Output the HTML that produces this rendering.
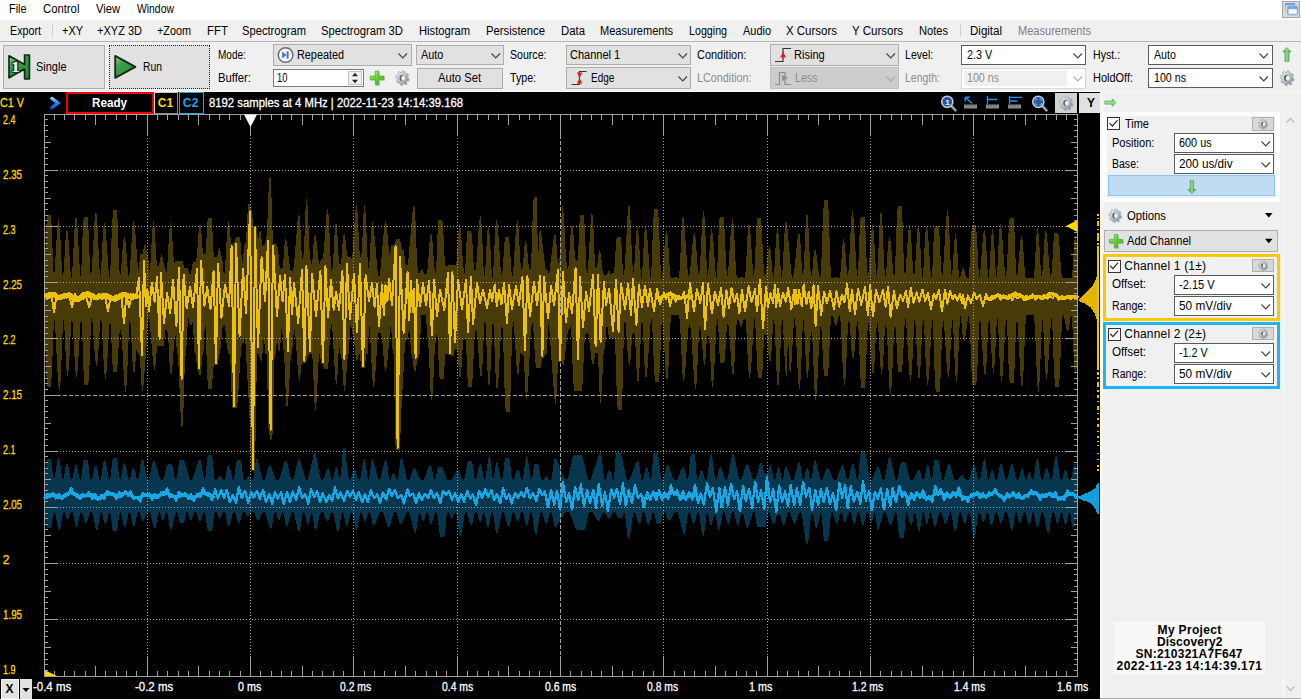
<!DOCTYPE html>
<html lang="en"><head><meta charset="utf-8"><title>WaveForms Scope</title><style>
html,body{margin:0;padding:0;}
body{width:1301px;height:699px;overflow:hidden;background:#f0f0f0;font-family:"Liberation Sans",sans-serif;font-size:12px;position:relative;}
.t{position:absolute;white-space:pre;display:block;}
.b{position:absolute;box-sizing:border-box;}
svg{position:absolute;overflow:visible;}
</style></head><body>
<div class="b" style="left:0px;top:0px;width:1301px;height:20px;background:#ffffff;"></div>
<span class="t" style="left:8.50px;top:2.54px;font-size:12px;line-height:12px;color:#000;transform:scaleX(0.9051);transform-origin:0 0;">File</span>
<span class="t" style="left:42.80px;top:2.54px;font-size:12px;line-height:12px;color:#000;transform:scaleX(0.9410);transform-origin:0 0;">Control</span>
<span class="t" style="left:96.00px;top:2.54px;font-size:12px;line-height:12px;color:#000;transform:scaleX(0.9305);transform-origin:0 0;">View</span>
<span class="t" style="left:137.40px;top:2.54px;font-size:12px;line-height:12px;color:#000;transform:scaleX(0.8646);transform-origin:0 0;">Window</span>
<div class="b" style="left:1282px;top:1px;width:18px;height:17px;background:#d9d9d9;border:1px solid #a6a6a6;"></div>
<svg style="left:0;top:0" width="1" height="1"><defs><linearGradient id="wi" x1="0" y1="0" x2="0" y2="1"><stop offset="0" stop-color="#6f9cdc"/><stop offset="1" stop-color="#a8c4ec"/></linearGradient></defs><rect x="1285" y="3" width="10.3" height="8.6" rx="1" fill="url(#wi)"/><rect x="1286" y="5.6" width="8.3" height="5" fill="#e6eefa"/><rect x="1287.5" y="6.4" width="10.3" height="8.4" rx="1" fill="url(#wi)" stroke="#5f8cd0" stroke-width="0.5"/><rect x="1288.6" y="9.2" width="8.2" height="4.6" fill="#f4f8fe"/></svg>
<div class="b" style="left:0px;top:20px;width:1301px;height:22px;background:#f0f0f0;"></div>
<div class="b" style="left:0px;top:41px;width:1301px;height:1px;background:#b6b6b6;"></div>
<span class="t" style="left:10.00px;top:24.54px;font-size:12px;line-height:12px;color:#000;transform:scaleX(0.8938);transform-origin:0 0;">Export</span>
<span class="t" style="left:62.00px;top:24.54px;font-size:12px;line-height:12px;color:#000;transform:scaleX(0.9124);transform-origin:0 0;">+XY</span>
<span class="t" style="left:97.00px;top:24.54px;font-size:12px;line-height:12px;color:#000;transform:scaleX(0.9180);transform-origin:0 0;">+XYZ 3D</span>
<span class="t" style="left:157.00px;top:24.54px;font-size:12px;line-height:12px;color:#000;transform:scaleX(0.9023);transform-origin:0 0;">+Zoom</span>
<span class="t" style="left:207.00px;top:24.54px;font-size:12px;line-height:12px;color:#000;transform:scaleX(0.9550);transform-origin:0 0;">FFT</span>
<span class="t" style="left:242.00px;top:24.54px;font-size:12px;line-height:12px;color:#000;transform:scaleX(0.9316);transform-origin:0 0;">Spectrogram</span>
<span class="t" style="left:321.00px;top:24.54px;font-size:12px;line-height:12px;color:#000;transform:scaleX(0.9385);transform-origin:0 0;">Spectrogram 3D</span>
<span class="t" style="left:419.00px;top:24.54px;font-size:12px;line-height:12px;color:#000;transform:scaleX(0.9327);transform-origin:0 0;">Histogram</span>
<span class="t" style="left:486.00px;top:24.54px;font-size:12px;line-height:12px;color:#000;transform:scaleX(0.9411);transform-origin:0 0;">Persistence</span>
<span class="t" style="left:561.00px;top:24.54px;font-size:12px;line-height:12px;color:#000;transform:scaleX(0.9469);transform-origin:0 0;">Data</span>
<span class="t" style="left:600.00px;top:24.54px;font-size:12px;line-height:12px;color:#000;transform:scaleX(0.9198);transform-origin:0 0;">Measurements</span>
<span class="t" style="left:689.00px;top:24.54px;font-size:12px;line-height:12px;color:#000;transform:scaleX(0.8898);transform-origin:0 0;">Logging</span>
<span class="t" style="left:743.00px;top:24.54px;font-size:12px;line-height:12px;color:#000;transform:scaleX(0.9123);transform-origin:0 0;">Audio</span>
<span class="t" style="left:786.00px;top:24.54px;font-size:12px;line-height:12px;color:#000;transform:scaleX(0.9560);transform-origin:0 0;">X Cursors</span>
<span class="t" style="left:852.00px;top:24.54px;font-size:12px;line-height:12px;color:#000;transform:scaleX(0.9599);transform-origin:0 0;">Y Cursors</span>
<span class="t" style="left:919.00px;top:24.54px;font-size:12px;line-height:12px;color:#000;transform:scaleX(0.9251);transform-origin:0 0;">Notes</span>
<span class="t" style="left:970.00px;top:24.54px;font-size:12px;line-height:12px;color:#000;transform:scaleX(0.9597);transform-origin:0 0;">Digital</span>
<span class="t" style="left:1018.00px;top:24.54px;font-size:12px;line-height:12px;color:#808080;transform:scaleX(0.9198);transform-origin:0 0;">Measurements</span>
<div class="b" style="left:52px;top:24px;width:1px;height:13px;background:#d0d0d0;"></div>
<div class="b" style="left:960px;top:24px;width:1px;height:13px;background:#d0d0d0;"></div>
<div class="b" style="left:0px;top:42px;width:1301px;height:50px;background:#f0f0f0;"></div>
<div class="b" style="left:0px;top:91px;width:1301px;height:1px;background:#fafafa;"></div>
<div class="b" style="left:3px;top:45px;width:102px;height:44px;background:#e1e1e1;border:1px solid #adadad;"></div>
<div class="b" style="left:109px;top:45px;width:101px;height:44px;background:#e1e1e1;border:1px solid #222;border-style:dotted;"></div>
<svg style="left:0;top:0" width="1" height="1"><defs><linearGradient id="gg" x1="0" y1="0" x2="0.9" y2="1"><stop offset="0" stop-color="#a4d0a0"/><stop offset="0.33" stop-color="#3fa04c"/><stop offset="1" stop-color="#1e8838"/></linearGradient></defs><path d="M9,55.8 L24.6,64.6 L24.6,55 L29.4,55 L29.4,78.8 L24.6,78.8 L24.6,69 L9,77.8 Z" fill="url(#gg)" stroke="#0e2a12" stroke-width="1.7" stroke-linejoin="round"/><path d="M115.2,55.9 L135.4,66.9 L115.2,77.9 Z" fill="url(#gg)" stroke="#0e2a12" stroke-width="1.8" stroke-linejoin="round"/></svg>
<span class="t" style="left:10.6px;top:60.6px;font-family:'Liberation Serif',serif;font-weight:bold;font-size:14px;line-height:14px;color:#fff;transform:scaleX(1.25);transform-origin:0 0;text-shadow:-1px 0 #243424,1px 0 #243424,0 -1px #243424,0 1px #243424,1px 1px #243424,-1px -1px #243424,1px -1px #243424,-1px 1px #243424;">1</span>
<span class="t" style="left:35.50px;top:60.84px;font-size:12px;line-height:12px;color:#000;transform:scaleX(0.9144);transform-origin:0 0;">Single</span>
<span class="t" style="left:142.50px;top:60.84px;font-size:12px;line-height:12px;color:#000;transform:scaleX(0.8631);transform-origin:0 0;">Run</span>
<span class="t" style="left:217.60px;top:49.04px;font-size:12px;line-height:12px;color:#000;transform:scaleX(0.8365);transform-origin:0 0;">Mode:</span>
<span class="t" style="left:217.60px;top:72.14px;font-size:12px;line-height:12px;color:#000;transform:scaleX(0.9393);transform-origin:0 0;">Buffer:</span>
<div class="b" style="left:273px;top:44px;width:139px;height:22px;background:#e1e1e1;border:1px solid #adadad;"></div>
<svg style="left:0;top:0" width="1" height="1"><circle cx="285.6" cy="55" r="7.3" fill="#f4f6fa" stroke="#6a6a6a" stroke-width="1.4"/><path d="M282.2,51.6 L286.6,55 L282.2,58.4 Z" fill="#3c78d8"/><rect x="286.6" y="51.4" width="2" height="7.2" fill="#3c78d8"/></svg>
<span class="t" style="left:297.40px;top:49.04px;font-size:12px;line-height:12px;color:#000;transform:scaleX(0.9031);transform-origin:0 0;">Repeated</span>
<svg style="left:398.45px;top:53.25px" width="9.5" height="5.5"><polyline points="0.5,0.5 4.75,5 9,0.5" fill="none" stroke="#404040" stroke-width="1.1"/></svg>
<div class="b" style="left:273px;top:69px;width:91px;height:18px;background:#fff;border:1px solid #7a7a7a;"></div>
<span class="t" style="left:277.00px;top:72.14px;font-size:12px;line-height:12px;color:#000;transform:scaleX(0.7792);transform-origin:0 0;">10</span>
<div class="b" style="left:348px;top:71px;width:14px;height:14px;background:#f0f0f0;border:1px solid #c4c4c4;"></div>
<svg style="left:0;top:0" width="1" height="1"><path d="M352,76.2 L355,72.8 L358,76.2 Z M352,79.8 L355,83.2 L358,79.8 Z" fill="#222"/></svg>
<svg style="left:0;top:0" width="1" height="1"><defs><linearGradient id="pl1" x1="0" y1="0" x2="0.8" y2="1"><stop offset="0" stop-color="#c4f4a4"/><stop offset="0.45" stop-color="#6fd23e"/><stop offset="1" stop-color="#3fb41c"/></linearGradient></defs><path d="M375.3,71 h3.4 v5.1 h5.1 v3.4 h-5.1 v5.1 h-3.4 v-5.1 h-5.1 v-3.4 h5.1 z" transform="translate(0.7,0.9)" fill="#4a6a3a" opacity="0.35" stroke="#4a6a3a" stroke-width="0.8" stroke-linejoin="round"/><path d="M375.3,71 h3.4 v5.1 h5.1 v3.4 h-5.1 v5.1 h-3.4 v-5.1 h-5.1 v-3.4 h5.1 z" fill="url(#pl1)" stroke="#48b020" stroke-width="0.7" stroke-linejoin="round"/></svg>
<svg style="left:0;top:0" width="1" height="1"><defs><linearGradient id="gr1" x1="0" y1="0" x2="1" y2="1"><stop offset="0" stop-color="#f4f5f6"/><stop offset="0.5" stop-color="#bcc2c8"/><stop offset="1" stop-color="#6f7c88"/></linearGradient></defs><polygon points="408.99,78.31 408.57,80.52 406.90,80.35 406.05,81.70 406.83,83.30 405.08,84.55 404.01,83.16 402.52,83.47 402.01,85.19 399.96,84.75 400.12,82.94 398.86,82.03 397.37,82.87 396.21,80.99 397.51,79.83 397.22,78.24 395.61,77.69 396.03,75.48 397.70,75.65 398.55,74.30 397.77,72.70 399.52,71.45 400.59,72.84 402.08,72.53 402.59,70.81 404.64,71.25 404.48,73.06 405.74,73.97 407.23,73.13 408.39,75.01 407.09,76.17 407.38,77.76" transform="translate(0.9,1.1)" fill="#70777d" opacity="0.35"/><polygon points="408.99,78.31 408.57,80.52 406.90,80.35 406.05,81.70 406.83,83.30 405.08,84.55 404.01,83.16 402.52,83.47 402.01,85.19 399.96,84.75 400.12,82.94 398.86,82.03 397.37,82.87 396.21,80.99 397.51,79.83 397.22,78.24 395.61,77.69 396.03,75.48 397.70,75.65 398.55,74.30 397.77,72.70 399.52,71.45 400.59,72.84 402.08,72.53 402.59,70.81 404.64,71.25 404.48,73.06 405.74,73.97 407.23,73.13 408.39,75.01 407.09,76.17 407.38,77.76" fill="url(#gr1)" stroke="#8f99a2" stroke-width="0.5"/><ellipse cx="402.10" cy="78.00" rx="2.59" ry="3.02" fill="#55626c"/><ellipse cx="403.20" cy="78.20" rx="1.94" ry="2.59" fill="#eef0f1"/></svg>
<div class="b" style="left:416px;top:45px;width:88px;height:20px;background:#e1e1e1;border:1px solid #adadad;"></div>
<span class="t" style="left:420.70px;top:49.04px;font-size:12px;line-height:12px;color:#000;transform:scaleX(0.9033);transform-origin:0 0;">Auto</span>
<svg style="left:490.75px;top:53.25px" width="9.5" height="5.5"><polyline points="0.5,0.5 4.75,5 9,0.5" fill="none" stroke="#404040" stroke-width="1.1"/></svg>
<div class="b" style="left:417px;top:68px;width:86px;height:21px;background:#e1e1e1;border:1px solid #adadad;"></div>
<span class="t" style="left:438.00px;top:72.14px;font-size:12px;line-height:12px;color:#000;transform:scaleX(0.9341);transform-origin:0 0;">Auto Set</span>
<span class="t" style="left:509.50px;top:49.04px;font-size:12px;line-height:12px;color:#000;transform:scaleX(0.8826);transform-origin:0 0;">Source:</span>
<span class="t" style="left:510.00px;top:72.14px;font-size:12px;line-height:12px;color:#000;transform:scaleX(0.8859);transform-origin:0 0;">Type:</span>
<div class="b" style="left:566px;top:45px;width:125px;height:20px;background:#e1e1e1;border:1px solid #adadad;"></div>
<span class="t" style="left:569.50px;top:49.04px;font-size:12px;line-height:12px;color:#000;transform:scaleX(0.9176);transform-origin:0 0;">Channel 1</span>
<svg style="left:677.55px;top:53.25px" width="9.5" height="5.5"><polyline points="0.5,0.5 4.75,5 9,0.5" fill="none" stroke="#404040" stroke-width="1.1"/></svg>
<div class="b" style="left:566px;top:67px;width:125px;height:22px;background:#e1e1e1;border:1px solid #adadad;"></div>
<svg style="left:0;top:0" width="1" height="1"><path d="M571.5,84.5 H579.5 V71.5 H586.5" fill="none" stroke="#333" stroke-width="1.2"/><path d="M579.5,78 L576.8,72.5 H582.2 Z M579.5,78 L576.8,83.5 H582.2 Z" fill="#f01818"/></svg>
<span class="t" style="left:590.70px;top:72.14px;font-size:12px;line-height:12px;color:#000;transform:scaleX(0.8314);transform-origin:0 0;">Edge</span>
<svg style="left:677.55px;top:76.25px" width="9.5" height="5.5"><polyline points="0.5,0.5 4.75,5 9,0.5" fill="none" stroke="#404040" stroke-width="1.1"/></svg>
<span class="t" style="left:696.70px;top:49.04px;font-size:12px;line-height:12px;color:#000;transform:scaleX(0.9124);transform-origin:0 0;">Condition:</span>
<span class="t" style="left:697.40px;top:72.14px;font-size:12px;line-height:12px;color:#8c8c8c;transform:scaleX(0.8994);transform-origin:0 0;">LCondition:</span>
<div class="b" style="left:770px;top:44px;width:129px;height:22px;background:#e1e1e1;border:1px solid #adadad;"></div>
<svg style="left:0;top:0" width="1" height="1"><path d="M775,61.5 H783 V48.5 H791" fill="none" stroke="#333" stroke-width="1.2"/><path d="M783,51.5 L780.2,57.5 H785.8 Z" fill="#f01818"/></svg>
<span class="t" style="left:794.30px;top:49.04px;font-size:12px;line-height:12px;color:#000;transform:scaleX(0.9207);transform-origin:0 0;">Rising</span>
<svg style="left:885.75px;top:53.25px" width="9.5" height="5.5"><polyline points="0.5,0.5 4.75,5 9,0.5" fill="none" stroke="#404040" stroke-width="1.1"/></svg>
<div class="b" style="left:770px;top:67px;width:129px;height:22px;background:#cccccc;border:1px solid #bfbfbf;"></div>
<svg style="left:0;top:0" width="1" height="1"><path d="M775,84.5 H779.5 V72.5 H785 V84.5 H791" fill="none" stroke="#8a8a8a" stroke-width="1.2"/><path d="M782,75 L788.5,78 L782,81 Z" fill="#909090"/></svg>
<span class="t" style="left:794.60px;top:72.14px;font-size:12px;line-height:12px;color:#8c8c8c;transform:scaleX(0.8837);transform-origin:0 0;">Less</span>
<svg style="left:885.75px;top:76.25px" width="9.5" height="5.5"><polyline points="0.5,0.5 4.75,5 9,0.5" fill="none" stroke="#a8a8a8" stroke-width="1.1"/></svg>
<span class="t" style="left:905.40px;top:49.04px;font-size:12px;line-height:12px;color:#000;transform:scaleX(0.8807);transform-origin:0 0;">Level:</span>
<span class="t" style="left:905.40px;top:72.14px;font-size:12px;line-height:12px;color:#8c8c8c;transform:scaleX(0.8742);transform-origin:0 0;">Length:</span>
<div class="b" style="left:961px;top:45px;width:125px;height:20px;background:#fff;border:1px solid #5a5a5a;"></div>
<span class="t" style="left:966.80px;top:49.04px;font-size:12px;line-height:12px;color:#000;transform:scaleX(0.8993);transform-origin:0 0;">2.3 V</span>
<svg style="left:1072.55px;top:53.25px" width="9.5" height="5.5"><polyline points="0.5,0.5 4.75,5 9,0.5" fill="none" stroke="#404040" stroke-width="1.1"/></svg>
<div class="b" style="left:961px;top:68px;width:125px;height:21px;background:#fff;border:1px solid #d9d9d9;"></div>
<div class="b" style="left:964px;top:71px;width:103px;height:15px;background:#f0f0f0;"></div>
<span class="t" style="left:967.00px;top:72.14px;font-size:12px;line-height:12px;color:#8c8c8c;transform:scaleX(0.8882);transform-origin:0 0;">100 ns</span>
<svg style="left:1072.55px;top:76.25px" width="9.5" height="5.5"><polyline points="0.5,0.5 4.75,5 9,0.5" fill="none" stroke="#b0b0b0" stroke-width="1.1"/></svg>
<span class="t" style="left:1092.50px;top:49.04px;font-size:12px;line-height:12px;color:#000;transform:scaleX(0.8836);transform-origin:0 0;">Hyst.:</span>
<span class="t" style="left:1092.50px;top:72.14px;font-size:12px;line-height:12px;color:#000;transform:scaleX(0.9133);transform-origin:0 0;">HoldOff:</span>
<div class="b" style="left:1148px;top:45px;width:125px;height:20px;background:#fff;border:1px solid #5a5a5a;"></div>
<span class="t" style="left:1154.00px;top:49.04px;font-size:12px;line-height:12px;color:#000;transform:scaleX(0.8831);transform-origin:0 0;">Auto</span>
<svg style="left:1259.25px;top:53.25px" width="9.5" height="5.5"><polyline points="0.5,0.5 4.75,5 9,0.5" fill="none" stroke="#404040" stroke-width="1.1"/></svg>
<div class="b" style="left:1148px;top:68px;width:125px;height:20px;background:#fff;border:1px solid #5a5a5a;"></div>
<span class="t" style="left:1154.00px;top:72.14px;font-size:12px;line-height:12px;color:#000;transform:scaleX(0.8882);transform-origin:0 0;">100 ns</span>
<svg style="left:1259.25px;top:76.25px" width="9.5" height="5.5"><polyline points="0.5,0.5 4.75,5 9,0.5" fill="none" stroke="#404040" stroke-width="1.1"/></svg>
<svg style="left:0;top:0" width="1" height="1"><defs><linearGradient id="gup" x1="0" y1="0" x2="1" y2="0"><stop offset="0" stop-color="#2f902f"/><stop offset="0.5" stop-color="#9ad892"/><stop offset="1" stop-color="#2f902f"/></linearGradient></defs><path d="M1286.9,47.6 L1291.2,51.9 H1289.1 V61.6 H1284.9 V51.9 H1282.7 Z" fill="url(#gup)" stroke="#3c9c3a" stroke-width="0.5" stroke-linejoin="round"/></svg>
<svg style="left:0;top:0" width="1" height="1"><defs><linearGradient id="gr2" x1="0" y1="0" x2="1" y2="1"><stop offset="0" stop-color="#f4f5f6"/><stop offset="0.5" stop-color="#bcc2c8"/><stop offset="1" stop-color="#6f7c88"/></linearGradient></defs><polygon points="1293.78,78.32 1293.35,80.59 1291.62,80.41 1290.76,81.80 1291.55,83.45 1289.76,84.73 1288.65,83.30 1287.13,83.62 1286.60,85.39 1284.49,84.93 1284.66,83.08 1283.37,82.15 1281.83,83.00 1280.64,81.07 1281.97,79.89 1281.67,78.24 1280.02,77.68 1280.45,75.41 1282.18,75.59 1283.04,74.20 1282.25,72.55 1284.04,71.27 1285.15,72.70 1286.67,72.38 1287.20,70.61 1289.31,71.07 1289.14,72.92 1290.43,73.85 1291.97,73.00 1293.16,74.93 1291.83,76.11 1292.13,77.76" transform="translate(0.9,1.1)" fill="#70777d" opacity="0.35"/><polygon points="1293.78,78.32 1293.35,80.59 1291.62,80.41 1290.76,81.80 1291.55,83.45 1289.76,84.73 1288.65,83.30 1287.13,83.62 1286.60,85.39 1284.49,84.93 1284.66,83.08 1283.37,82.15 1281.83,83.00 1280.64,81.07 1281.97,79.89 1281.67,78.24 1280.02,77.68 1280.45,75.41 1282.18,75.59 1283.04,74.20 1282.25,72.55 1284.04,71.27 1285.15,72.70 1286.67,72.38 1287.20,70.61 1289.31,71.07 1289.14,72.92 1290.43,73.85 1291.97,73.00 1293.16,74.93 1291.83,76.11 1292.13,77.76" fill="url(#gr2)" stroke="#8f99a2" stroke-width="0.5"/><ellipse cx="1286.70" cy="78.00" rx="2.66" ry="3.11" fill="#55626c"/><ellipse cx="1287.80" cy="78.20" rx="2.00" ry="2.66" fill="#eef0f1"/></svg>
<div class="b" style="left:0px;top:92px;width:1100px;height:607px;background:#000;"></div>
<span class="t" style="left:-0.50px;top:96.74px;font-size:12px;line-height:12px;color:#ffd800;transform:scaleX(0.8996);transform-origin:0 0;-webkit-text-stroke:0.3px #ffd800;">C1 V</span>
<svg style="left:0;top:0" width="1" height="1"><defs><linearGradient id="bl" x1="0" y1="0" x2="0" y2="1"><stop offset="0" stop-color="#8cc4ff"/><stop offset="0.45" stop-color="#2a84ff"/><stop offset="1" stop-color="#1060e0"/></linearGradient></defs><path d="M51.8,98.4 L58,103.1 L51.8,107.8" fill="none" stroke="url(#bl)" stroke-width="3.3" stroke-linecap="round" stroke-linejoin="miter"/></svg>
<div class="b" style="left:66px;top:92px;width:88px;height:22px;background:#000;border:2px solid #f00000;"></div>
<span class="t" style="left:91.50px;top:96.74px;font-size:12px;line-height:12px;color:#fff;transform:scaleX(0.9718);transform-origin:0 0;font-weight:bold;">Ready</span>
<div class="b" style="left:154px;top:92px;width:24px;height:22px;background:#000;border:1px solid #8a8a8a;border-left-color:#e8e8e8;border-top-color:#c8c8c8;"></div>
<span class="t" style="left:157.80px;top:96.94px;font-size:12px;line-height:12px;color:#ffd800;letter-spacing:0.061px;font-weight:bold;">C1</span>
<div class="b" style="left:179px;top:92px;width:25px;height:22px;background:#000;border:1px solid #1ea4e8;"></div>
<span class="t" style="left:182.80px;top:96.94px;font-size:12px;line-height:12px;color:#18a8f0;letter-spacing:0.261px;font-weight:bold;">C2</span>
<span class="t" style="left:208.50px;top:96.74px;font-size:12px;line-height:12px;color:#fff;transform:scaleX(0.9417);transform-origin:0 0;-webkit-text-stroke:0.3px #fff;">8192 samples at 4 MHz | 2022-11-23 14:14:39.168</span>
<svg style="left:0;top:0" width="1" height="1"><g><line x1="950.8" y1="105.3" x2="955.5" y2="110.3" stroke="#9aa0a8" stroke-width="2.6" stroke-linecap="round"/><circle cx="947.3" cy="101.8" r="5.6" fill="#2458a8" stroke="#c8d0dc" stroke-width="1.5"/><text x="945.2" y="105" font-size="8" font-weight="bold" fill="#fff" font-family="Liberation Sans,sans-serif">1</text></g><g><line x1="1041.8" y1="105.3" x2="1046.5" y2="110.3" stroke="#9aa0a8" stroke-width="2.6" stroke-linecap="round"/><circle cx="1038.3" cy="101.8" r="5.6" fill="#2458a8" stroke="#c8d0dc" stroke-width="1.5"/><path d="M1035.3,100.8 v-1.8 h1.8 M1041.3,100.8 v-1.8 h-1.8 M1035.3,102.8 v1.8 h1.8 M1041.3,102.8 v1.8 h-1.8" stroke="#9cc0f0" stroke-width="0.8" fill="none"/></g><rect x="964" y="104.5" width="13" height="4" fill="#8a8a8a"/><path d="M966.5,104.5 v2 M969,104.5 v2 M971.5,104.5 v2 M974,104.5 v2" stroke="#555" stroke-width="0.8"/><rect x="986" y="104.5" width="13" height="4" fill="#8a8a8a"/><path d="M988.5,104.5 v2 M991,104.5 v2 M993.5,104.5 v2 M996,104.5 v2" stroke="#555" stroke-width="0.8"/><rect x="1008" y="104.5" width="13" height="4" fill="#8a8a8a"/><path d="M1010.5,104.5 v2 M1013,104.5 v2 M1015.5,104.5 v2 M1018,104.5 v2" stroke="#555" stroke-width="0.8"/><path d="M965.5,97.5 L972,103.5 M965.2,97.2 h4.4 M965.2,97.2 v4.4" stroke="#1e90ff" stroke-width="1.4" fill="none"/><path d="M987.5,96 v8 M987.5,99.5 h9.5" stroke="#1e90ff" stroke-width="1.3" fill="none"/><path d="M1009.5,96 v8 M1009.5,97.3 h12.5 M1009.5,101 h8" stroke="#1e90ff" stroke-width="1.3" fill="none"/></svg>
<div class="b" style="left:1055px;top:93px;width:22px;height:20px;background:#d2d2d2;"></div>
<div class="b" style="left:1079px;top:93px;width:21px;height:20px;background:#e1e1e1;"></div>
<span class="t" style="left:1087.00px;top:96.94px;font-size:12px;line-height:12px;color:#000;font-weight:bold;">Y</span>
<svg style="left:0;top:0" width="1" height="1"><defs><linearGradient id="gr3" x1="0" y1="0" x2="1" y2="1"><stop offset="0" stop-color="#f4f5f6"/><stop offset="0.5" stop-color="#bcc2c8"/><stop offset="1" stop-color="#6f7c88"/></linearGradient></defs><polygon points="1072.69,103.31 1072.27,105.52 1070.60,105.35 1069.75,106.70 1070.53,108.30 1068.78,109.55 1067.71,108.16 1066.22,108.47 1065.71,110.19 1063.66,109.75 1063.82,107.94 1062.56,107.03 1061.07,107.87 1059.91,105.99 1061.21,104.83 1060.92,103.24 1059.31,102.69 1059.73,100.48 1061.40,100.65 1062.25,99.30 1061.47,97.70 1063.22,96.45 1064.29,97.84 1065.78,97.53 1066.29,95.81 1068.34,96.25 1068.18,98.06 1069.44,98.97 1070.93,98.13 1072.09,100.01 1070.79,101.17 1071.08,102.76" transform="translate(0.9,1.1)" fill="#70777d" opacity="0.35"/><polygon points="1072.69,103.31 1072.27,105.52 1070.60,105.35 1069.75,106.70 1070.53,108.30 1068.78,109.55 1067.71,108.16 1066.22,108.47 1065.71,110.19 1063.66,109.75 1063.82,107.94 1062.56,107.03 1061.07,107.87 1059.91,105.99 1061.21,104.83 1060.92,103.24 1059.31,102.69 1059.73,100.48 1061.40,100.65 1062.25,99.30 1061.47,97.70 1063.22,96.45 1064.29,97.84 1065.78,97.53 1066.29,95.81 1068.34,96.25 1068.18,98.06 1069.44,98.97 1070.93,98.13 1072.09,100.01 1070.79,101.17 1071.08,102.76" fill="url(#gr3)" stroke="#8f99a2" stroke-width="0.5"/><ellipse cx="1065.80" cy="103.00" rx="2.59" ry="3.02" fill="#55626c"/><ellipse cx="1066.90" cy="103.20" rx="1.94" ry="2.59" fill="#eef0f1"/></svg>
<svg style="left:0;top:0" width="1100" height="699" shape-rendering="crispEdges"><path d="M45,265L45,265L46,234L47,215L48,215L49,215L50,215L51,215L52,233L53,263L54,278L55,266L56,249L57,232L58,219L59,219L60,230L61,250L62,271L63,278L64,266L65,249L66,232L67,230L68,232L69,247L70,263L71,278L72,277L73,258L74,239L75,219L76,217L77,219L78,237L79,255L80,273L81,278L82,252L83,223L84,217L85,217L86,217L87,217L88,217L89,242L90,267L91,278L92,266L93,249L94,231L95,214L96,212L97,215L98,237L99,260L100,278L101,272L102,252L103,233L104,223L105,223L106,234L107,248L108,262L109,277L110,278L111,252L112,226L113,210L114,210L115,210L116,210L117,210L118,230L119,264L120,278L121,270L122,257L123,244L124,237L125,237L126,246L127,260L128,273L129,278L130,269L131,252L132,234L133,221L134,221L135,228L136,242L137,256L138,269L139,271L140,254L141,254L142,254L143,254L144,245L145,244L146,245L147,254L148,254L149,266L150,273L151,254L152,235L153,221L154,221L155,232L156,253L157,266L158,266L159,266L160,261L161,254L162,254L163,259L164,266L165,266L166,274L167,271L168,253L169,236L170,223L171,223L172,232L173,249L174,265L175,261L176,261L177,261L178,261L179,261L180,261L181,261L182,261L183,261L184,268L185,268L186,268L187,268L188,268L189,274L190,274L191,274L192,267L193,262L194,262L195,262L196,262L197,254L198,241L199,226L200,224L201,226L202,242L203,254L204,254L205,254L206,252L207,224L208,218L209,218L210,218L211,218L212,218L213,246L214,257L215,257L216,257L217,257L218,253L219,248L220,248L221,255L222,257L223,265L224,278L225,269L226,251L227,233L228,221L229,221L230,229L231,244L232,244L233,244L234,242L235,242L236,237L237,237L238,237L239,237L240,237L241,247L242,262L243,262L244,245L245,245L246,242L247,223L248,205L249,203L250,205L251,210L252,210L253,226L254,226L255,226L256,226L257,226L258,244L259,232L260,231L261,232L262,246L263,245L264,245L265,245L266,239L267,233L268,206L269,179L270,176L271,180L272,215L273,244L274,244L275,244L276,245L277,245L278,248L279,260L280,269L281,268L282,268L283,267L284,251L285,239L286,239L287,243L288,251L289,260L290,268L291,271L292,271L293,271L294,266L295,253L296,240L297,228L298,215L299,214L300,217L301,242L302,259L303,259L304,251L305,221L306,199L307,199L308,213L309,239L310,259L311,261L312,267L313,252L314,237L315,235L316,236L317,246L318,255L319,264L320,264L321,259L322,259L323,259L324,248L325,234L326,219L327,209L328,209L329,221L330,244L331,268L332,273L333,264L334,245L335,225L336,223L337,225L338,246L339,264L340,264L341,264L342,253L343,236L344,234L345,235L346,245L347,255L348,257L349,257L350,257L351,257L352,261L353,246L354,231L355,216L356,205L357,205L358,218L359,245L360,257L361,257L362,250L363,224L364,205L365,205L366,219L367,246L368,268L369,268L370,254L371,233L372,222L373,222L374,230L375,241L376,253L377,264L378,276L379,277L380,275L381,264L382,252L383,241L384,229L385,221L386,221L387,227L388,240L389,252L390,257L391,245L392,245L393,245L394,244L395,244L396,239L397,239L398,239L399,239L400,239L401,244L402,250L403,250L404,250L405,261L406,265L407,265L408,264L409,252L410,241L411,229L412,218L413,206L414,205L415,208L416,234L417,261L418,273L419,273L420,273L421,270L422,269L423,270L424,274L425,274L426,274L427,274L428,265L429,250L430,235L431,234L432,235L433,249L434,263L435,273L436,273L437,249L438,220L439,220L440,220L441,220L442,220L443,224L444,245L445,266L446,266L447,266L448,265L449,265L450,265L451,265L452,265L453,265L454,265L455,265L456,265L457,259L458,238L459,224L460,224L461,232L462,248L463,263L464,273L465,273L466,253L467,231L468,231L469,231L470,231L471,231L472,235L473,253L474,270L475,270L476,270L477,255L478,239L479,224L480,216L481,216L482,232L483,255L484,278L485,275L486,256L487,236L488,227L489,227L490,240L491,259L492,278L493,277L494,256L495,235L496,220L497,220L498,228L499,243L500,259L501,275L502,276L503,266L504,248L505,237L506,237L507,237L508,237L509,237L510,248L511,266L512,278L513,275L514,259L515,244L516,228L517,220L518,220L519,235L520,256L521,270L522,270L523,265L524,251L525,241L526,241L527,247L528,258L529,269L530,269L531,269L532,239L533,204L534,197L535,197L536,197L537,197L538,269L539,234L540,230L541,231L542,240L543,248L544,257L545,265L546,270L547,270L548,270L549,275L550,267L551,259L552,251L553,243L554,235L555,234L556,236L557,254L558,263L559,263L560,253L561,226L562,206L563,206L564,217L565,238L566,259L567,265L568,273L569,259L570,243L571,227L572,225L573,227L574,242L575,257L576,261L577,261L578,259L579,232L580,215L581,215L582,215L583,215L584,215L585,232L586,259L587,278L588,269L589,251L590,233L591,215L592,213L593,216L594,241L595,267L596,268L597,268L598,259L599,250L600,250L601,255L602,265L603,274L604,275L605,275L606,275L607,275L608,271L609,271L610,271L611,276L612,273L613,273L614,273L615,262L616,241L617,237L618,237L619,237L620,237L621,237L622,255L623,273L624,277L625,264L626,245L627,226L628,207L629,205L630,207L631,232L632,257L633,272L634,272L635,254L636,236L637,227L638,227L639,240L640,259L641,278L642,277L643,258L644,239L645,226L646,226L647,233L648,247L649,261L650,276L651,278L652,254L653,226L654,209L655,209L656,209L657,209L658,209L659,225L660,252L661,278L662,278L663,265L664,253L665,240L666,231L667,231L668,239L669,256L670,273L671,278L672,278L673,278L674,277L675,277L676,277L677,278L678,278L679,278L680,264L681,242L682,219L683,217L684,218L685,233L686,248L687,262L688,276L689,276L690,272L691,261L692,250L693,239L694,233L695,233L696,243L697,258L698,272L699,276L700,266L701,246L702,225L703,211L704,211L705,223L706,248L707,272L708,277L709,261L710,242L711,229L712,229L713,236L714,250L715,264L716,278L717,276L718,249L719,222L720,217L721,217L722,217L723,217L724,217L725,240L726,262L727,278L728,274L729,259L730,244L731,229L732,219L733,219L734,229L735,250L736,271L737,278L738,278L739,278L740,277L741,277L742,277L743,278L744,278L745,278L746,267L747,246L748,226L749,224L750,226L751,241L752,256L753,272L754,278L755,260L756,234L757,218L758,218L759,218L760,218L761,218L762,232L763,256L764,272L765,278L766,271L767,262L768,253L769,246L770,246L771,253L772,266L773,278L774,277L775,258L776,238L777,228L778,228L779,240L780,257L781,275L782,278L783,262L784,243L785,224L786,222L787,223L788,235L789,246L790,258L791,270L792,278L793,278L794,273L795,263L796,253L797,244L798,234L799,233L800,235L801,252L802,270L803,278L804,263L805,240L806,216L807,214L808,216L809,240L810,263L811,278L812,275L813,263L814,251L815,250L816,251L817,259L818,267L819,275L820,278L821,273L822,245L823,217L824,200L825,200L826,200L827,200L828,200L829,220L830,254L831,278L832,278L833,278L834,278L835,277L836,277L837,277L838,278L839,278L840,278L841,267L842,251L843,239L844,239L845,246L846,260L847,273L848,277L849,265L850,244L851,222L852,211L853,211L854,224L855,242L856,260L857,278L858,274L859,248L860,222L861,217L862,217L863,217L864,217L865,217L866,244L867,271L868,278L869,266L870,251L871,236L872,225L873,225L874,234L875,253L876,272L877,278L878,260L879,237L880,214L881,212L882,214L883,237L884,260L885,278L886,275L887,260L888,245L889,237L890,237L891,245L892,257L893,269L894,278L895,272L896,242L897,212L898,206L899,206L900,206L901,206L902,206L903,237L904,268L905,278L906,266L907,251L908,236L909,225L910,225L911,234L912,252L913,269L914,278L915,269L916,252L917,234L918,225L919,225L920,239L921,258L922,277L923,277L924,258L925,239L926,226L927,226L928,233L929,248L930,263L931,278L932,278L933,254L934,231L935,226L936,226L937,226L938,226L939,226L940,246L941,265L942,278L943,272L944,255L945,238L946,222L947,210L948,210L949,222L950,247L951,272L952,278L953,263L954,246L955,234L956,234L957,243L958,262L959,278L960,278L961,275L962,269L963,268L964,268L965,273L966,277L967,278L968,278L969,277L970,257L971,237L972,225L973,225L974,225L975,225L976,225L977,238L978,260L979,278L980,276L981,263L982,250L983,237L984,230L985,230L986,242L987,260L988,278L989,278L990,260L991,242L992,229L993,229L994,239L995,258L996,277L997,276L998,256L999,234L1000,224L1001,224L1002,233L1003,247L1004,260L1005,274L1006,278L1007,265L1008,244L1009,222L1010,218L1011,218L1012,218L1013,218L1014,218L1015,245L1016,271L1017,278L1018,270L1019,257L1020,245L1021,236L1022,236L1023,244L1024,259L1025,275L1026,278L1027,278L1028,278L1029,278L1030,278L1031,278L1032,278L1033,278L1034,278L1035,263L1036,242L1037,228L1038,228L1039,237L1040,256L1041,274L1042,278L1043,264L1044,247L1045,231L1046,231L1047,235L1048,248L1049,261L1050,274L1051,278L1052,269L1053,250L1054,233L1055,233L1056,233L1057,233L1058,233L1059,237L1060,254L1061,270L1062,278L1063,278L1064,278L1065,278L1066,278L1067,278L1068,278L1069,278L1070,278L1071,278L1072,278L1073,262L1074,245L1075,236L1076,236L1077,246L1077,362L1076,374L1075,374L1074,363L1073,340L1072,317L1071,315L1070,321L1069,329L1068,331L1067,331L1066,327L1065,321L1064,316L1063,315L1062,319L1061,345L1060,371L1059,387L1058,387L1057,387L1056,387L1055,387L1054,371L1053,344L1052,316L1051,320L1050,336L1049,352L1048,369L1047,379L1046,379L1045,367L1044,344L1043,321L1042,319L1041,346L1040,373L1039,392L1038,392L1037,379L1036,354L1035,328L1034,315L1033,315L1032,315L1031,315L1030,315L1029,315L1028,315L1027,315L1026,315L1025,333L1024,359L1023,384L1022,387L1021,385L1020,367L1019,348L1018,330L1017,315L1016,329L1015,356L1014,383L1013,383L1012,383L1011,383L1010,383L1009,377L1008,350L1007,322L1006,317L1005,334L1004,352L1003,370L1002,382L1001,382L1000,370L999,346L998,322L997,316L996,337L995,358L994,373L993,373L992,363L991,343L990,324L989,315L988,332L987,353L986,373L985,375L984,373L983,358L982,343L981,328L980,315L979,327L978,353L977,380L976,385L975,385L974,385L973,385L972,385L971,357L970,330L969,315L968,317L967,325L966,333L965,340L964,341L963,340L962,328L961,317L960,315L959,339L958,364L957,382L956,382L955,370L954,346L953,322L952,317L951,339L950,361L949,377L948,377L947,369L946,354L945,339L944,323L943,318L942,336L941,364L940,392L939,392L938,392L937,392L936,392L935,386L934,353L933,321L932,319L931,338L930,357L929,376L928,385L927,385L926,369L925,346L924,324L923,315L922,335L921,356L920,377L919,379L918,377L917,355L916,334L915,315L914,326L913,348L912,370L911,381L910,381L909,369L908,353L907,336L906,320L905,315L904,337L903,359L902,372L901,372L900,372L899,372L898,372L897,356L896,329L895,324L894,334L893,357L892,379L891,394L890,394L889,382L888,357L887,333L886,323L885,327L884,346L883,365L882,374L881,374L880,360L879,341L878,322L877,323L876,333L875,353L874,372L873,374L872,372L871,356L870,340L869,324L868,322L867,339L866,370L865,388L864,388L863,388L862,388L861,388L860,370L859,339L858,321L857,321L856,332L855,345L854,357L853,358L852,357L851,342L850,327L849,318L848,324L847,347L846,369L845,385L844,385L843,373L842,350L841,327L840,315L839,315L838,319L837,324L836,325L835,325L834,320L833,316L832,316L831,316L830,334L829,360L828,376L827,376L826,376L825,376L824,376L823,361L822,337L821,322L820,333L819,347L818,368L817,389L816,400L815,400L814,380L813,351L812,333L811,331L810,341L809,363L808,378L807,378L806,367L805,344L804,322L803,318L802,345L801,371L800,389L799,389L798,378L797,357L796,336L795,316L794,320L793,337L792,354L791,371L790,373L789,366L788,323L787,376L786,376L785,366L784,345L783,324L782,315L781,336L780,360L779,384L778,386L777,383L776,358L775,333L774,315L773,325L772,343L771,360L770,362L769,361L768,348L767,335L766,335L765,335L764,335L763,362L762,378L761,378L760,378L759,378L758,378L757,363L756,338L755,318L754,321L753,337L752,354L751,370L750,378L749,378L748,364L747,343L746,322L745,318L744,319L743,321L742,326L741,327L740,326L739,320L738,320L737,320L736,330L735,351L734,373L733,375L732,373L731,358L730,343L729,328L728,324L727,324L726,340L725,359L724,363L723,363L722,363L721,363L720,363L719,342L718,321L717,316L716,335L715,354L714,374L713,387L712,387L711,374L710,349L709,336L708,336L707,336L706,352L705,365L704,365L703,357L702,341L701,336L700,324L699,331L698,354L697,377L696,389L695,389L694,378L693,362L692,346L691,330L690,325L689,325L688,331L687,345L686,360L685,374L684,381L683,381L682,366L681,344L680,323L679,315L678,315L677,315L676,315L675,315L674,315L673,315L672,315L671,315L670,331L669,354L668,378L667,380L666,378L665,361L664,343L663,326L662,315L661,336L660,365L659,382L658,382L657,382L656,382L655,382L654,368L653,344L652,320L651,318L650,331L649,346L648,361L647,376L646,378L645,376L644,353L643,331L642,315L641,332L640,356L639,380L638,382L637,380L636,358L635,336L634,332L633,332L632,337L631,353L630,365L629,365L628,358L627,344L626,329L625,316L624,328L623,369L622,410L621,410L620,410L619,410L618,410L617,403L616,368L615,339L614,338L613,338L612,338L611,338L610,338L609,338L608,332L607,321L606,333L605,349L604,349L603,360L602,389L601,403L600,403L599,380L598,353L597,353L596,353L595,353L594,363L593,365L592,364L591,355L590,347L589,338L588,330L587,334L586,334L585,334L584,350L583,377L582,391L581,391L580,391L579,391L578,391L577,391L576,391L575,391L574,391L573,377L572,350L571,324L570,329L569,329L568,330L567,338L566,347L565,356L564,364L563,365L562,363L561,362L560,362L559,362L558,362L557,387L556,404L555,404L554,394L553,380L552,366L551,353L550,339L549,325L548,325L547,354L546,354L545,354L544,358L543,358L542,358L541,367L540,368L539,368L538,368L537,368L536,368L535,357L534,340L533,323L532,323L531,330L530,349L529,367L528,386L527,399L526,399L525,385L524,358L523,354L522,354L521,354L520,353L519,373L518,375L517,373L516,358L515,342L514,327L513,316L512,338L511,375L510,412L509,412L508,412L507,412L506,412L505,405L504,369L503,333L502,323L501,332L500,350L499,369L498,387L497,389L496,386L495,360L494,334L493,315L492,333L491,358L490,383L489,386L488,383L487,358L486,333L485,315L484,330L483,353L482,375L481,377L480,375L479,360L478,345L477,331L476,331L475,331L474,346L473,372L472,387L471,387L470,387L469,387L468,387L467,369L466,339L465,339L464,339L463,342L462,359L461,376L460,378L459,376L458,353L457,349L456,349L455,349L454,354L453,355L452,357L451,356L450,355L449,355L448,355L447,354L446,354L445,354L444,379L443,379L442,379L441,379L440,379L439,374L438,346L437,328L436,342L435,344L434,366L433,389L432,400L431,400L430,381L429,354L428,342L427,333L426,315L425,315L424,315L423,315L422,315L421,315L420,354L419,354L418,360L417,360L416,370L415,372L414,371L413,362L412,354L411,354L410,335L409,327L408,340L407,340L406,340L405,344L404,363L403,381L402,399L401,417L400,450L399,450L398,450L397,450L396,450L395,440L394,354L393,354L392,344L391,322L390,333L389,344L388,355L387,366L386,371L385,371L384,362L383,350L382,338L381,333L380,333L379,333L378,333L377,348L376,364L375,379L374,387L373,387L372,373L371,353L370,332L369,321L368,354L367,354L366,354L365,368L364,368L363,368L362,368L361,368L360,354L359,354L358,359L357,361L356,360L355,350L354,340L353,339L352,329L351,326L350,326L349,354L348,354L347,365L346,380L345,391L344,391L343,378L342,361L341,354L340,354L339,342L338,367L337,384L336,384L335,375L334,357L333,340L332,324L331,324L330,334L329,356L328,369L327,369L326,369L325,369L324,369L323,364L322,364L321,364L320,354L319,354L318,371L317,394L316,410L315,410L314,395L313,364L312,354L311,354L310,354L309,354L308,357L307,359L306,363L305,363L304,363L303,363L302,363L301,368L300,381L299,381L298,372L297,358L296,344L295,331L294,330L293,340L292,354L291,354L290,369L289,387L288,405L287,407L286,404L285,372L284,354L283,345L282,322L281,336L280,350L279,351L278,350L277,336L276,354L275,354L274,363L273,432L272,437L271,441L270,438L269,432L268,425L267,354L266,354L265,354L264,334L263,347L262,360L261,361L260,360L259,354L258,354L257,354L256,411L255,471L254,471L253,471L252,471L251,471L250,428L249,407L248,389L247,371L246,353L245,335L244,343L243,343L242,343L241,349L240,365L239,382L238,398L237,408L236,408L235,408L234,408L233,408L232,408L231,375L230,354L229,354L228,351L227,350L226,336L225,325L224,325L223,325L222,332L221,345L220,354L219,354L218,365L217,365L216,365L215,365L214,365L213,370L212,389L211,389L210,389L209,389L208,389L207,370L206,339L205,315L204,348L203,354L202,358L201,374L200,376L199,374L198,370L197,370L196,354L195,354L194,350L193,320L192,325L191,325L190,325L189,320L188,315L187,339L186,354L185,358L184,391L183,425L182,428L181,425L180,399L179,377L178,354L177,354L176,339L175,333L174,344L173,358L172,373L171,374L170,372L169,353L168,333L167,330L166,330L165,330L164,346L163,346L162,346L161,346L160,346L159,346L158,346L157,346L156,360L155,370L154,370L153,362L152,350L151,338L150,326L149,318L148,318L147,338L146,354L145,364L144,380L143,391L142,391L141,378L140,357L139,354L138,354L137,349L136,351L135,371L134,373L133,371L132,351L131,332L130,315L129,328L128,354L127,379L126,392L125,392L124,379L123,360L122,340L121,330L120,330L119,337L118,359L117,372L116,372L115,372L114,372L113,372L112,356L111,329L110,318L109,330L108,348L107,366L106,379L105,379L104,369L103,349L102,328L101,315L100,325L99,341L98,358L97,366L96,366L95,356L94,343L93,329L92,315L91,322L90,351L89,379L88,385L87,385L86,385L85,385L84,385L83,355L82,326L81,315L80,332L79,348L78,365L77,377L76,377L75,367L74,347L73,328L72,315L71,327L70,347L69,366L68,376L67,376L66,361L65,340L64,319L63,321L62,347L61,373L60,391L59,391L58,381L57,362L56,343L55,323L54,319L53,342L52,370L51,387L50,387L49,387L48,387L47,387L46,366L45,332Z" fill="#483b08"/><path d="M45,477L45,477L46,466L47,459L48,459L49,459L50,459L51,459L52,465L53,476L54,480L55,476L56,469L57,463L58,458L59,458L60,462L61,470L62,478L63,480L64,477L65,470L66,464L67,464L68,464L69,470L70,476L71,480L72,480L73,476L74,471L75,465L76,465L77,466L78,471L79,476L80,480L81,480L82,472L83,462L84,460L85,460L86,460L87,460L88,460L89,469L90,478L91,480L92,479L93,475L94,471L95,466L96,466L97,467L98,472L99,478L100,480L101,479L102,472L103,465L104,460L105,460L106,463L107,469L108,475L109,480L110,480L111,473L112,463L113,458L114,458L115,458L116,458L117,458L118,465L119,476L120,480L121,478L122,472L123,466L124,463L125,463L126,466L127,472L128,478L129,480L130,480L131,475L132,471L133,468L134,468L135,471L136,475L137,480L138,480L139,477L140,469L141,462L142,459L143,459L144,463L145,468L146,473L147,479L148,480L149,480L150,475L151,471L152,466L153,461L154,461L155,462L156,465L157,468L158,472L159,475L160,478L161,480L162,480L163,480L164,477L165,473L166,469L167,466L168,464L169,464L170,464L171,464L172,464L173,468L174,474L175,479L176,480L177,477L178,470L179,463L180,460L181,460L182,460L183,460L184,460L185,463L186,466L187,470L188,474L189,478L190,480L191,480L192,480L193,478L194,475L195,472L196,469L197,466L198,463L199,460L200,460L201,461L202,467L203,473L204,479L205,480L206,472L207,460L208,455L209,455L210,455L211,455L212,455L213,463L214,475L215,480L216,480L217,480L218,478L219,476L220,476L221,477L222,479L223,480L224,480L225,480L226,474L227,468L228,465L229,465L230,468L231,472L232,477L233,480L234,480L235,473L236,464L237,460L238,460L239,460L240,460L241,460L242,467L243,477L244,480L245,480L246,480L247,478L248,476L249,476L250,477L251,479L252,480L253,480L254,475L255,467L256,459L257,459L258,460L259,465L260,469L261,474L262,478L263,480L264,480L265,479L266,476L267,472L268,469L269,466L270,466L271,467L272,469L273,472L274,475L275,477L276,480L277,480L278,480L279,480L280,477L281,474L282,471L283,467L284,464L285,461L286,461L287,462L288,466L289,470L290,475L291,479L292,480L293,480L294,477L295,473L296,469L297,464L298,460L299,459L300,460L301,463L302,467L303,471L304,474L305,478L306,480L307,480L308,480L309,475L310,471L311,467L312,462L313,458L314,453L315,453L316,455L317,460L318,466L319,471L320,476L321,480L322,480L323,480L324,477L325,475L326,472L327,469L328,468L329,469L330,473L331,478L332,480L333,480L334,475L335,470L336,467L337,467L338,471L339,477L340,480L341,474L342,461L343,448L344,447L345,449L346,457L347,466L348,474L349,480L350,480L351,478L352,475L353,472L354,470L355,470L356,472L357,476L358,479L359,480L360,480L361,475L362,468L363,462L364,459L365,459L366,466L367,473L368,480L369,480L370,472L371,464L372,459L373,459L374,462L375,467L376,471L377,475L378,479L379,480L380,480L381,477L382,472L383,468L384,464L385,460L386,459L387,461L388,470L389,479L390,480L391,479L392,475L393,473L394,473L395,475L396,479L397,480L398,480L399,472L400,463L401,458L402,458L403,461L404,466L405,470L406,475L407,480L408,480L409,480L410,479L411,476L412,473L413,470L414,468L415,468L416,470L417,472L418,475L419,477L420,479L421,480L422,480L423,480L424,480L425,477L426,475L427,472L428,469L429,467L430,465L431,465L432,469L433,474L434,479L435,480L436,478L437,470L438,467L439,467L440,467L441,467L442,467L443,469L444,472L445,474L446,477L447,480L448,480L449,480L450,480L451,480L452,479L453,477L454,475L455,474L456,472L457,470L458,470L459,471L460,473L461,476L462,479L463,480L464,480L465,477L466,471L467,464L468,461L469,461L470,461L471,461L472,461L473,467L474,475L475,480L476,480L477,476L478,471L479,466L480,464L481,464L482,468L483,474L484,480L485,480L486,475L487,468L488,460L489,456L490,456L491,464L492,474L493,480L494,477L495,470L496,462L497,462L498,464L499,469L500,474L501,479L502,480L503,476L504,467L505,458L506,458L507,458L508,458L509,458L510,461L511,470L512,479L513,480L514,480L515,476L516,473L517,470L518,470L519,471L520,475L521,479L522,480L523,479L524,471L525,464L526,456L527,456L528,459L529,466L530,473L531,480L532,480L533,473L534,464L535,464L536,464L537,464L538,464L539,466L540,474L541,480L542,480L543,480L544,479L545,477L546,476L547,476L548,478L549,480L550,480L551,480L552,476L553,468L554,461L555,458L556,458L557,460L558,463L559,465L560,468L561,470L562,473L563,475L564,478L565,479L566,479L567,480L568,478L569,474L570,469L571,465L572,461L573,456L574,455L575,455L576,455L577,455L578,455L579,455L580,455L581,455L582,455L583,458L584,463L585,467L586,471L587,476L588,480L589,480L590,480L591,479L592,476L593,473L594,470L595,467L596,464L597,461L598,458L599,455L600,453L601,453L602,461L603,469L604,478L605,480L606,479L607,475L608,471L609,470L610,470L611,473L612,477L613,480L614,480L615,465L616,452L617,452L618,452L619,452L620,452L621,454L622,458L623,462L624,467L625,471L626,476L627,480L628,480L629,480L630,479L631,476L632,474L633,471L634,468L635,466L636,463L637,461L638,461L639,463L640,470L641,477L642,480L643,480L644,476L645,471L646,467L647,467L648,469L649,474L650,479L651,480L652,473L653,458L654,453L655,453L656,453L657,453L658,453L659,461L660,470L661,478L662,480L663,480L664,476L665,472L666,468L667,465L668,465L669,467L670,469L671,472L672,475L673,478L674,480L675,480L676,480L677,480L678,478L679,475L680,473L681,470L682,468L683,467L684,467L685,471L686,475L687,480L688,480L689,471L690,458L691,454L692,454L693,454L694,454L695,454L696,468L697,480L698,480L699,477L700,472L701,470L702,470L703,472L704,476L705,480L706,480L707,479L708,471L709,463L710,455L711,454L712,455L713,463L714,471L715,479L716,480L717,478L718,474L719,469L720,467L721,467L722,469L723,472L724,476L725,479L726,480L727,480L728,477L729,472L730,466L731,461L732,455L733,454L734,455L735,459L736,464L737,469L738,474L739,479L740,480L741,480L742,478L743,475L744,471L745,468L746,465L747,464L748,464L749,467L750,470L751,473L752,477L753,479L754,479L755,479L756,478L757,475L758,471L759,467L760,464L761,462L762,462L763,467L764,473L765,474L766,474L767,474L768,472L769,467L770,465L771,465L772,470L773,476L774,480L775,480L776,476L777,471L778,467L779,467L780,469L781,476L782,480L783,480L784,474L785,467L786,467L787,467L788,470L789,473L790,476L791,480L792,480L793,480L794,479L795,475L796,471L797,467L798,463L799,462L800,462L801,469L802,476L803,479L804,479L805,475L806,469L807,468L808,468L809,474L810,479L811,480L812,477L813,469L814,461L815,460L816,461L817,465L818,470L819,474L820,479L821,480L822,480L823,479L824,476L825,473L826,470L827,468L828,468L829,470L830,472L831,474L832,477L833,479L834,480L835,480L836,480L837,479L838,476L839,473L840,470L841,468L842,465L843,465L844,467L845,472L846,476L847,480L848,480L849,478L850,473L851,468L852,464L853,464L854,465L855,470L856,475L857,480L858,480L859,470L860,457L861,451L862,451L863,451L864,451L865,451L866,456L867,462L868,469L869,475L870,480L871,480L872,480L873,478L874,475L875,472L876,470L877,467L878,467L879,467L880,471L881,474L882,478L883,480L884,480L885,478L886,473L887,467L888,462L889,457L890,457L891,459L892,464L893,469L894,473L895,478L896,480L897,480L898,477L899,471L900,466L901,462L902,462L903,462L904,462L905,462L906,464L907,468L908,472L909,476L910,480L911,480L912,480L913,480L914,478L915,476L916,474L917,472L918,470L919,470L920,470L921,475L922,479L923,480L924,480L925,476L926,470L927,465L928,465L929,467L930,473L931,478L932,480L933,472L934,460L935,460L936,460L937,460L938,460L939,462L940,468L941,475L942,480L943,480L944,479L945,475L946,471L947,468L948,464L949,464L950,464L951,468L952,472L953,476L954,480L955,480L956,480L957,480L958,479L959,478L960,476L961,475L962,475L963,476L964,478L965,479L966,480L967,480L968,480L969,480L970,477L971,473L972,470L973,466L974,465L975,465L976,470L977,474L978,479L979,480L980,480L981,475L982,469L983,463L984,459L985,459L986,464L987,473L988,480L989,480L990,476L991,471L992,470L993,470L994,474L995,478L996,480L997,480L998,476L999,470L1000,464L1001,464L1002,464L1003,469L1004,474L1005,478L1006,480L1007,480L1008,477L1009,473L1010,468L1011,464L1012,464L1013,464L1014,469L1015,474L1016,479L1017,480L1018,480L1019,478L1020,474L1021,470L1022,468L1023,468L1024,473L1025,479L1026,480L1027,479L1028,473L1029,472L1030,472L1031,475L1032,479L1033,480L1034,478L1035,470L1036,461L1037,459L1038,459L1039,465L1040,472L1041,479L1042,480L1043,480L1044,476L1045,471L1046,468L1047,468L1048,470L1049,475L1050,479L1051,480L1052,480L1053,472L1054,465L1055,457L1056,456L1057,456L1058,463L1059,471L1060,479L1061,480L1062,480L1063,476L1064,472L1065,470L1066,470L1067,472L1068,476L1069,480L1070,480L1071,480L1072,475L1073,470L1074,464L1075,464L1076,464L1077,470L1077,514L1076,519L1075,524L1074,528L1073,528L1072,525L1071,518L1070,512L1069,512L1068,516L1067,522L1066,525L1065,525L1064,521L1063,516L1062,512L1061,512L1060,516L1059,521L1058,524L1057,524L1056,520L1055,516L1054,512L1053,512L1052,514L1051,520L1050,527L1049,533L1048,533L1047,531L1046,526L1045,520L1044,515L1043,512L1042,512L1041,514L1040,519L1039,523L1038,527L1037,527L1036,525L1035,519L1034,512L1033,512L1032,514L1031,520L1030,524L1029,524L1028,523L1027,518L1026,514L1025,512L1024,512L1023,514L1022,518L1021,521L1020,523L1019,523L1018,518L1017,513L1016,512L1015,514L1014,521L1013,529L1012,530L1011,530L1010,525L1009,520L1008,515L1007,512L1006,512L1005,512L1004,515L1003,519L1002,522L1001,523L1000,523L999,519L998,515L997,512L996,512L995,513L994,518L993,522L992,525L991,525L990,522L989,516L988,512L987,512L986,515L985,519L984,522L983,522L982,519L981,516L980,512L979,512L978,514L977,522L976,530L975,538L974,538L973,536L972,528L971,520L970,512L969,512L968,513L967,518L966,522L965,524L964,524L963,520L962,516L961,512L960,512L959,513L958,520L957,526L956,531L955,531L954,529L953,523L952,517L951,512L950,512L949,514L948,518L947,522L946,524L945,524L944,521L943,517L942,514L941,512L940,512L939,513L938,517L937,521L936,525L935,527L934,527L933,521L932,515L931,512L930,512L929,517L928,522L927,524L926,524L925,518L924,513L923,512L922,515L921,523L920,530L919,531L918,531L917,523L916,515L915,512L914,513L913,519L912,525L911,525L910,524L909,520L908,515L907,512L906,512L905,525L904,538L903,538L902,538L901,538L900,538L899,535L898,526L897,516L896,512L895,512L894,516L893,519L892,523L891,525L890,525L889,523L888,520L887,516L886,513L885,512L884,512L883,513L882,517L881,521L880,525L879,529L878,530L877,529L876,519L875,513L874,513L873,519L872,522L871,522L870,519L869,515L868,512L867,512L866,514L865,519L864,524L863,525L862,525L861,520L860,515L859,512L858,512L857,515L856,520L855,524L854,524L853,522L852,517L851,513L850,512L849,512L848,514L847,517L846,521L845,522L844,522L843,517L842,512L841,512L840,513L839,518L838,523L837,524L836,523L835,520L834,516L833,513L832,512L831,513L830,524L829,534L828,541L827,541L826,541L825,541L824,541L823,532L822,518L821,512L820,514L819,520L818,525L817,528L816,528L815,525L814,519L813,514L812,513L811,515L810,525L809,534L808,544L807,544L806,543L805,536L804,529L803,522L802,516L801,512L800,512L799,513L798,516L797,519L796,522L795,524L794,524L793,521L792,518L791,515L790,512L789,512L788,512L787,515L786,519L785,523L784,525L783,525L782,523L781,518L780,513L779,515L778,515L777,515L776,519L775,523L774,524L773,523L772,520L771,517L770,514L769,512L768,512L767,515L766,526L765,527L764,527L763,527L762,527L761,527L760,527L759,527L758,527L757,527L756,520L755,513L754,512L753,512L752,515L751,519L750,522L749,525L748,528L747,528L746,527L745,521L744,516L743,514L742,514L741,514L740,519L739,524L738,525L737,525L736,521L735,517L734,512L733,512L732,512L731,516L730,520L729,524L728,524L727,522L726,518L725,513L724,512L723,512L722,517L721,523L720,528L719,530L718,530L717,523L716,516L715,515L714,515L713,519L712,524L711,525L710,525L709,519L708,513L707,512L706,517L705,527L704,536L703,536L702,535L701,527L700,520L699,512L698,512L697,513L696,517L695,522L694,524L693,524L692,520L691,516L690,512L689,512L688,514L687,521L686,528L685,535L684,535L683,533L682,529L681,525L680,521L679,517L678,513L677,512L676,512L675,512L674,513L673,515L672,517L671,519L670,521L669,521L668,520L667,517L666,514L665,512L664,512L663,513L662,519L661,524L660,524L659,524L658,524L657,524L656,522L655,516L654,512L653,512L652,514L651,518L650,522L649,525L648,525L647,524L646,519L645,514L644,512L643,512L642,515L641,520L640,524L639,524L638,523L637,519L636,515L635,512L634,512L633,515L632,522L631,529L630,536L629,539L628,539L627,532L626,523L625,514L624,512L623,514L622,518L621,518L620,518L619,518L618,518L617,517L616,513L615,512L614,512L613,512L612,514L611,517L610,519L609,519L608,518L607,516L606,514L605,514L604,512L603,512L602,514L601,517L600,520L599,521L598,521L597,520L596,518L595,516L594,515L593,513L592,512L591,512L590,512L589,512L588,516L587,521L586,526L585,530L584,530L583,530L582,530L581,530L580,530L579,530L578,530L577,530L576,529L575,526L574,524L573,521L572,518L571,516L570,513L569,513L568,512L567,512L566,512L565,512L564,514L563,516L562,517L561,519L560,521L559,522L558,524L557,526L556,527L555,527L554,525L553,519L552,514L551,512L550,512L549,516L548,520L547,524L546,524L545,522L544,519L543,515L542,512L541,512L540,514L539,520L538,526L537,533L536,534L535,534L534,528L533,520L532,513L531,512L530,514L529,519L528,524L527,525L526,525L525,521L524,516L523,512L522,512L521,512L520,516L519,520L518,521L517,521L516,518L515,514L514,512L513,512L512,515L511,520L510,525L509,527L508,527L507,523L506,520L505,516L504,512L503,512L502,512L501,517L500,522L499,527L498,532L497,533L496,533L495,526L494,519L493,512L492,512L491,515L490,520L489,526L488,527L487,527L486,521L485,514L484,512L483,513L482,518L481,522L480,522L479,521L478,516L477,512L476,512L475,512L474,517L473,522L472,525L471,525L470,524L469,520L468,516L467,512L466,512L465,512L464,519L463,525L462,531L461,536L460,536L459,533L458,524L457,516L456,512L455,512L454,514L453,517L452,518L451,518L450,515L449,513L448,512L447,512L446,521L445,533L444,537L443,537L442,537L441,537L440,537L439,529L438,520L437,512L436,512L435,513L434,516L433,520L432,523L431,524L430,524L429,518L428,512L427,512L426,513L425,518L424,521L423,521L422,519L421,515L420,512L419,512L418,518L417,526L416,533L415,533L414,531L413,527L412,523L411,519L410,515L409,512L408,512L407,512L406,513L405,516L404,518L403,521L402,523L401,524L400,524L399,521L398,517L397,514L396,512L395,512L394,512L393,515L392,519L391,522L390,526L389,527L388,527L387,524L386,521L385,518L384,515L383,512L382,512L381,512L380,512L379,514L378,517L377,520L376,522L375,525L374,525L373,525L372,520L371,515L370,512L369,512L368,513L367,517L366,520L365,521L364,521L363,517L362,513L361,512L360,513L359,519L358,526L357,530L356,530L355,526L354,520L353,515L352,512L351,512L350,516L349,520L348,525L347,525L346,525L345,520L344,515L343,512L342,512L341,517L340,524L339,531L338,531L337,531L336,526L335,520L334,515L333,512L332,512L331,513L330,516L329,519L328,521L327,521L326,519L325,517L324,514L323,512L322,512L321,512L320,514L319,518L318,523L317,527L316,530L315,530L314,525L313,517L312,512L311,512L310,518L309,523L308,524L307,524L306,519L305,514L304,512L303,512L302,517L301,524L300,531L299,531L298,531L297,526L296,522L295,517L294,513L293,512L292,512L291,514L290,518L289,521L288,525L287,526L286,526L285,521L284,515L283,512L282,512L281,515L280,519L279,520L278,520L277,516L276,512L275,512L274,513L273,520L272,527L271,529L270,529L269,525L268,522L267,518L266,514L265,512L264,512L263,512L262,513L261,515L260,517L259,519L258,520L257,520L256,517L255,514L254,512L253,512L252,512L251,512L250,513L249,515L248,516L247,516L246,514L245,512L244,512L243,512L242,513L241,518L240,522L239,523L238,523L237,519L236,516L235,512L234,512L233,512L232,516L231,520L230,525L229,526L228,526L227,521L226,516L225,512L224,512L223,512L222,514L221,517L220,518L219,518L218,516L217,513L216,512L215,512L214,515L213,524L212,531L211,531L210,531L209,531L208,531L207,527L206,518L205,512L204,512L203,514L202,517L201,520L200,521L199,521L198,517L197,514L196,512L195,512L194,512L193,516L192,519L191,520L190,520L189,516L188,513L187,512L186,512L185,520L184,523L183,523L182,523L181,523L180,523L179,519L178,514L177,512L176,512L175,515L174,519L173,524L172,528L171,529L170,529L169,522L168,515L167,512L166,512L165,515L164,519L163,520L162,520L161,516L160,512L159,512L158,513L157,520L156,527L155,528L154,528L153,524L152,520L151,516L150,512L149,512L148,512L147,513L146,515L145,518L144,520L143,521L142,521L141,517L140,513L139,512L138,512L137,515L136,520L135,525L134,526L133,526L132,521L131,516L130,512L129,512L128,515L127,521L126,526L125,527L124,527L123,522L122,517L121,513L120,512L119,516L118,525L117,531L116,531L115,531L114,531L113,531L112,526L111,516L110,512L109,512L108,517L107,521L106,524L105,524L104,522L103,517L102,512L101,512L100,515L99,522L98,529L97,530L96,530L95,525L94,520L93,515L92,512L91,512L90,512L89,516L88,519L87,522L86,523L85,523L84,519L83,515L82,512L81,512L80,514L79,519L78,524L77,527L76,527L75,523L74,518L73,513L72,512L71,512L70,514L69,517L68,519L67,519L66,517L65,513L64,512L63,512L62,518L61,525L60,530L59,530L58,527L57,522L56,517L55,512L54,512L53,516L52,523L51,528L50,528L49,528L48,528L47,528L46,523L45,514Z" fill="#07374f"/></svg>
<svg style="left:0;top:0" width="1100" height="699" shape-rendering="crispEdges"><line x1="147.5" y1="135" x2="147.5" y2="656" stroke="#a2a2a2" stroke-width="1" stroke-dasharray="1 2"/><line x1="57" y1="170.5" x2="1065" y2="170.5" stroke="#a2a2a2" stroke-width="1" stroke-dasharray="1 2"/><line x1="250.5" y1="135" x2="250.5" y2="656" stroke="#a2a2a2" stroke-width="1" stroke-dasharray="1 2"/><line x1="57" y1="226.5" x2="1065" y2="226.5" stroke="#a2a2a2" stroke-width="1" stroke-dasharray="1 2"/><line x1="353.5" y1="135" x2="353.5" y2="656" stroke="#a2a2a2" stroke-width="1" stroke-dasharray="1 2"/><line x1="57" y1="282.5" x2="1065" y2="282.5" stroke="#a2a2a2" stroke-width="1" stroke-dasharray="1 2"/><line x1="457.5" y1="135" x2="457.5" y2="656" stroke="#a2a2a2" stroke-width="1" stroke-dasharray="1 2"/><line x1="57" y1="338.5" x2="1065" y2="338.5" stroke="#a2a2a2" stroke-width="1" stroke-dasharray="1 2"/><line x1="560.5" y1="135" x2="560.5" y2="656" stroke="#a2a2a2" stroke-width="1" stroke-dasharray="4 2"/><line x1="57" y1="395.5" x2="1065" y2="395.5" stroke="#a2a2a2" stroke-width="1" stroke-dasharray="4 2"/><line x1="663.5" y1="135" x2="663.5" y2="656" stroke="#a2a2a2" stroke-width="1" stroke-dasharray="1 2"/><line x1="57" y1="451.5" x2="1065" y2="451.5" stroke="#a2a2a2" stroke-width="1" stroke-dasharray="1 2"/><line x1="767.5" y1="135" x2="767.5" y2="656" stroke="#a2a2a2" stroke-width="1" stroke-dasharray="1 2"/><line x1="57" y1="507.5" x2="1065" y2="507.5" stroke="#a2a2a2" stroke-width="1" stroke-dasharray="1 2"/><line x1="870.5" y1="135" x2="870.5" y2="656" stroke="#a2a2a2" stroke-width="1" stroke-dasharray="1 2"/><line x1="57" y1="563.5" x2="1065" y2="563.5" stroke="#a2a2a2" stroke-width="1" stroke-dasharray="1 2"/><line x1="973.5" y1="135" x2="973.5" y2="656" stroke="#a2a2a2" stroke-width="1" stroke-dasharray="1 2"/><line x1="57" y1="619.5" x2="1065" y2="619.5" stroke="#a2a2a2" stroke-width="1" stroke-dasharray="1 2"/><rect x="44.5" y="114.5" width="1033" height="562" fill="none" stroke="#a0a0a0" stroke-width="1"/><line x1="54.5" y1="115" x2="54.5" y2="120" stroke="#a0a0a0"/><line x1="54.5" y1="671" x2="54.5" y2="676" stroke="#a0a0a0"/><line x1="45" y1="119.5" x2="48" y2="119.5" stroke="#a0a0a0"/><line x1="1074" y1="119.5" x2="1077" y2="119.5" stroke="#a0a0a0"/><line x1="64.5" y1="115" x2="64.5" y2="120" stroke="#a0a0a0"/><line x1="64.5" y1="671" x2="64.5" y2="676" stroke="#a0a0a0"/><line x1="45" y1="125.5" x2="48" y2="125.5" stroke="#a0a0a0"/><line x1="1074" y1="125.5" x2="1077" y2="125.5" stroke="#a0a0a0"/><line x1="74.5" y1="115" x2="74.5" y2="120" stroke="#a0a0a0"/><line x1="74.5" y1="671" x2="74.5" y2="676" stroke="#a0a0a0"/><line x1="45" y1="130.5" x2="48" y2="130.5" stroke="#a0a0a0"/><line x1="1074" y1="130.5" x2="1077" y2="130.5" stroke="#a0a0a0"/><line x1="85.5" y1="115" x2="85.5" y2="120" stroke="#a0a0a0"/><line x1="85.5" y1="671" x2="85.5" y2="676" stroke="#a0a0a0"/><line x1="45" y1="136.5" x2="48" y2="136.5" stroke="#a0a0a0"/><line x1="1074" y1="136.5" x2="1077" y2="136.5" stroke="#a0a0a0"/><line x1="95.5" y1="115" x2="95.5" y2="125" stroke="#a0a0a0"/><line x1="95.5" y1="666" x2="95.5" y2="676" stroke="#a0a0a0"/><line x1="45" y1="142.5" x2="51" y2="142.5" stroke="#a0a0a0"/><line x1="1071" y1="142.5" x2="1077" y2="142.5" stroke="#a0a0a0"/><line x1="105.5" y1="115" x2="105.5" y2="120" stroke="#a0a0a0"/><line x1="105.5" y1="671" x2="105.5" y2="676" stroke="#a0a0a0"/><line x1="45" y1="147.5" x2="48" y2="147.5" stroke="#a0a0a0"/><line x1="1074" y1="147.5" x2="1077" y2="147.5" stroke="#a0a0a0"/><line x1="116.5" y1="115" x2="116.5" y2="120" stroke="#a0a0a0"/><line x1="116.5" y1="671" x2="116.5" y2="676" stroke="#a0a0a0"/><line x1="45" y1="153.5" x2="48" y2="153.5" stroke="#a0a0a0"/><line x1="1074" y1="153.5" x2="1077" y2="153.5" stroke="#a0a0a0"/><line x1="126.5" y1="115" x2="126.5" y2="120" stroke="#a0a0a0"/><line x1="126.5" y1="671" x2="126.5" y2="676" stroke="#a0a0a0"/><line x1="45" y1="158.5" x2="48" y2="158.5" stroke="#a0a0a0"/><line x1="1074" y1="158.5" x2="1077" y2="158.5" stroke="#a0a0a0"/><line x1="136.5" y1="115" x2="136.5" y2="120" stroke="#a0a0a0"/><line x1="136.5" y1="671" x2="136.5" y2="676" stroke="#a0a0a0"/><line x1="45" y1="164.5" x2="48" y2="164.5" stroke="#a0a0a0"/><line x1="1074" y1="164.5" x2="1077" y2="164.5" stroke="#a0a0a0"/><line x1="147.5" y1="115" x2="147.5" y2="135" stroke="#a0a0a0"/><line x1="147.5" y1="656" x2="147.5" y2="676" stroke="#a0a0a0"/><line x1="45" y1="170.5" x2="57" y2="170.5" stroke="#a0a0a0"/><line x1="1065" y1="170.5" x2="1077" y2="170.5" stroke="#a0a0a0"/><line x1="157.5" y1="115" x2="157.5" y2="120" stroke="#a0a0a0"/><line x1="157.5" y1="671" x2="157.5" y2="676" stroke="#a0a0a0"/><line x1="45" y1="175.5" x2="48" y2="175.5" stroke="#a0a0a0"/><line x1="1074" y1="175.5" x2="1077" y2="175.5" stroke="#a0a0a0"/><line x1="167.5" y1="115" x2="167.5" y2="120" stroke="#a0a0a0"/><line x1="167.5" y1="671" x2="167.5" y2="676" stroke="#a0a0a0"/><line x1="45" y1="181.5" x2="48" y2="181.5" stroke="#a0a0a0"/><line x1="1074" y1="181.5" x2="1077" y2="181.5" stroke="#a0a0a0"/><line x1="178.5" y1="115" x2="178.5" y2="120" stroke="#a0a0a0"/><line x1="178.5" y1="671" x2="178.5" y2="676" stroke="#a0a0a0"/><line x1="45" y1="187.5" x2="48" y2="187.5" stroke="#a0a0a0"/><line x1="1074" y1="187.5" x2="1077" y2="187.5" stroke="#a0a0a0"/><line x1="188.5" y1="115" x2="188.5" y2="120" stroke="#a0a0a0"/><line x1="188.5" y1="671" x2="188.5" y2="676" stroke="#a0a0a0"/><line x1="45" y1="192.5" x2="48" y2="192.5" stroke="#a0a0a0"/><line x1="1074" y1="192.5" x2="1077" y2="192.5" stroke="#a0a0a0"/><line x1="198.5" y1="115" x2="198.5" y2="125" stroke="#a0a0a0"/><line x1="198.5" y1="666" x2="198.5" y2="676" stroke="#a0a0a0"/><line x1="45" y1="198.5" x2="51" y2="198.5" stroke="#a0a0a0"/><line x1="1071" y1="198.5" x2="1077" y2="198.5" stroke="#a0a0a0"/><line x1="209.5" y1="115" x2="209.5" y2="120" stroke="#a0a0a0"/><line x1="209.5" y1="671" x2="209.5" y2="676" stroke="#a0a0a0"/><line x1="45" y1="203.5" x2="48" y2="203.5" stroke="#a0a0a0"/><line x1="1074" y1="203.5" x2="1077" y2="203.5" stroke="#a0a0a0"/><line x1="219.5" y1="115" x2="219.5" y2="120" stroke="#a0a0a0"/><line x1="219.5" y1="671" x2="219.5" y2="676" stroke="#a0a0a0"/><line x1="45" y1="209.5" x2="48" y2="209.5" stroke="#a0a0a0"/><line x1="1074" y1="209.5" x2="1077" y2="209.5" stroke="#a0a0a0"/><line x1="229.5" y1="115" x2="229.5" y2="120" stroke="#a0a0a0"/><line x1="229.5" y1="671" x2="229.5" y2="676" stroke="#a0a0a0"/><line x1="45" y1="215.5" x2="48" y2="215.5" stroke="#a0a0a0"/><line x1="1074" y1="215.5" x2="1077" y2="215.5" stroke="#a0a0a0"/><line x1="240.5" y1="115" x2="240.5" y2="120" stroke="#a0a0a0"/><line x1="240.5" y1="671" x2="240.5" y2="676" stroke="#a0a0a0"/><line x1="45" y1="220.5" x2="48" y2="220.5" stroke="#a0a0a0"/><line x1="1074" y1="220.5" x2="1077" y2="220.5" stroke="#a0a0a0"/><line x1="250.5" y1="115" x2="250.5" y2="135" stroke="#a0a0a0"/><line x1="250.5" y1="656" x2="250.5" y2="676" stroke="#a0a0a0"/><line x1="45" y1="226.5" x2="57" y2="226.5" stroke="#a0a0a0"/><line x1="1065" y1="226.5" x2="1077" y2="226.5" stroke="#a0a0a0"/><line x1="260.5" y1="115" x2="260.5" y2="120" stroke="#a0a0a0"/><line x1="260.5" y1="671" x2="260.5" y2="676" stroke="#a0a0a0"/><line x1="45" y1="232.5" x2="48" y2="232.5" stroke="#a0a0a0"/><line x1="1074" y1="232.5" x2="1077" y2="232.5" stroke="#a0a0a0"/><line x1="271.5" y1="115" x2="271.5" y2="120" stroke="#a0a0a0"/><line x1="271.5" y1="671" x2="271.5" y2="676" stroke="#a0a0a0"/><line x1="45" y1="237.5" x2="48" y2="237.5" stroke="#a0a0a0"/><line x1="1074" y1="237.5" x2="1077" y2="237.5" stroke="#a0a0a0"/><line x1="281.5" y1="115" x2="281.5" y2="120" stroke="#a0a0a0"/><line x1="281.5" y1="671" x2="281.5" y2="676" stroke="#a0a0a0"/><line x1="45" y1="243.5" x2="48" y2="243.5" stroke="#a0a0a0"/><line x1="1074" y1="243.5" x2="1077" y2="243.5" stroke="#a0a0a0"/><line x1="291.5" y1="115" x2="291.5" y2="120" stroke="#a0a0a0"/><line x1="291.5" y1="671" x2="291.5" y2="676" stroke="#a0a0a0"/><line x1="45" y1="248.5" x2="48" y2="248.5" stroke="#a0a0a0"/><line x1="1074" y1="248.5" x2="1077" y2="248.5" stroke="#a0a0a0"/><line x1="302.5" y1="115" x2="302.5" y2="125" stroke="#a0a0a0"/><line x1="302.5" y1="666" x2="302.5" y2="676" stroke="#a0a0a0"/><line x1="45" y1="254.5" x2="51" y2="254.5" stroke="#a0a0a0"/><line x1="1071" y1="254.5" x2="1077" y2="254.5" stroke="#a0a0a0"/><line x1="312.5" y1="115" x2="312.5" y2="120" stroke="#a0a0a0"/><line x1="312.5" y1="671" x2="312.5" y2="676" stroke="#a0a0a0"/><line x1="45" y1="260.5" x2="48" y2="260.5" stroke="#a0a0a0"/><line x1="1074" y1="260.5" x2="1077" y2="260.5" stroke="#a0a0a0"/><line x1="322.5" y1="115" x2="322.5" y2="120" stroke="#a0a0a0"/><line x1="322.5" y1="671" x2="322.5" y2="676" stroke="#a0a0a0"/><line x1="45" y1="265.5" x2="48" y2="265.5" stroke="#a0a0a0"/><line x1="1074" y1="265.5" x2="1077" y2="265.5" stroke="#a0a0a0"/><line x1="333.5" y1="115" x2="333.5" y2="120" stroke="#a0a0a0"/><line x1="333.5" y1="671" x2="333.5" y2="676" stroke="#a0a0a0"/><line x1="45" y1="271.5" x2="48" y2="271.5" stroke="#a0a0a0"/><line x1="1074" y1="271.5" x2="1077" y2="271.5" stroke="#a0a0a0"/><line x1="343.5" y1="115" x2="343.5" y2="120" stroke="#a0a0a0"/><line x1="343.5" y1="671" x2="343.5" y2="676" stroke="#a0a0a0"/><line x1="45" y1="276.5" x2="48" y2="276.5" stroke="#a0a0a0"/><line x1="1074" y1="276.5" x2="1077" y2="276.5" stroke="#a0a0a0"/><line x1="353.5" y1="115" x2="353.5" y2="135" stroke="#a0a0a0"/><line x1="353.5" y1="656" x2="353.5" y2="676" stroke="#a0a0a0"/><line x1="45" y1="282.5" x2="57" y2="282.5" stroke="#a0a0a0"/><line x1="1065" y1="282.5" x2="1077" y2="282.5" stroke="#a0a0a0"/><line x1="364.5" y1="115" x2="364.5" y2="120" stroke="#a0a0a0"/><line x1="364.5" y1="671" x2="364.5" y2="676" stroke="#a0a0a0"/><line x1="45" y1="288.5" x2="48" y2="288.5" stroke="#a0a0a0"/><line x1="1074" y1="288.5" x2="1077" y2="288.5" stroke="#a0a0a0"/><line x1="374.5" y1="115" x2="374.5" y2="120" stroke="#a0a0a0"/><line x1="374.5" y1="671" x2="374.5" y2="676" stroke="#a0a0a0"/><line x1="45" y1="293.5" x2="48" y2="293.5" stroke="#a0a0a0"/><line x1="1074" y1="293.5" x2="1077" y2="293.5" stroke="#a0a0a0"/><line x1="384.5" y1="115" x2="384.5" y2="120" stroke="#a0a0a0"/><line x1="384.5" y1="671" x2="384.5" y2="676" stroke="#a0a0a0"/><line x1="45" y1="299.5" x2="48" y2="299.5" stroke="#a0a0a0"/><line x1="1074" y1="299.5" x2="1077" y2="299.5" stroke="#a0a0a0"/><line x1="395.5" y1="115" x2="395.5" y2="120" stroke="#a0a0a0"/><line x1="395.5" y1="671" x2="395.5" y2="676" stroke="#a0a0a0"/><line x1="45" y1="305.5" x2="48" y2="305.5" stroke="#a0a0a0"/><line x1="1074" y1="305.5" x2="1077" y2="305.5" stroke="#a0a0a0"/><line x1="405.5" y1="115" x2="405.5" y2="125" stroke="#a0a0a0"/><line x1="405.5" y1="666" x2="405.5" y2="676" stroke="#a0a0a0"/><line x1="45" y1="310.5" x2="51" y2="310.5" stroke="#a0a0a0"/><line x1="1071" y1="310.5" x2="1077" y2="310.5" stroke="#a0a0a0"/><line x1="415.5" y1="115" x2="415.5" y2="120" stroke="#a0a0a0"/><line x1="415.5" y1="671" x2="415.5" y2="676" stroke="#a0a0a0"/><line x1="45" y1="316.5" x2="48" y2="316.5" stroke="#a0a0a0"/><line x1="1074" y1="316.5" x2="1077" y2="316.5" stroke="#a0a0a0"/><line x1="426.5" y1="115" x2="426.5" y2="120" stroke="#a0a0a0"/><line x1="426.5" y1="671" x2="426.5" y2="676" stroke="#a0a0a0"/><line x1="45" y1="321.5" x2="48" y2="321.5" stroke="#a0a0a0"/><line x1="1074" y1="321.5" x2="1077" y2="321.5" stroke="#a0a0a0"/><line x1="436.5" y1="115" x2="436.5" y2="120" stroke="#a0a0a0"/><line x1="436.5" y1="671" x2="436.5" y2="676" stroke="#a0a0a0"/><line x1="45" y1="327.5" x2="48" y2="327.5" stroke="#a0a0a0"/><line x1="1074" y1="327.5" x2="1077" y2="327.5" stroke="#a0a0a0"/><line x1="446.5" y1="115" x2="446.5" y2="120" stroke="#a0a0a0"/><line x1="446.5" y1="671" x2="446.5" y2="676" stroke="#a0a0a0"/><line x1="45" y1="333.5" x2="48" y2="333.5" stroke="#a0a0a0"/><line x1="1074" y1="333.5" x2="1077" y2="333.5" stroke="#a0a0a0"/><line x1="457.5" y1="115" x2="457.5" y2="135" stroke="#a0a0a0"/><line x1="457.5" y1="656" x2="457.5" y2="676" stroke="#a0a0a0"/><line x1="45" y1="338.5" x2="57" y2="338.5" stroke="#a0a0a0"/><line x1="1065" y1="338.5" x2="1077" y2="338.5" stroke="#a0a0a0"/><line x1="467.5" y1="115" x2="467.5" y2="120" stroke="#a0a0a0"/><line x1="467.5" y1="671" x2="467.5" y2="676" stroke="#a0a0a0"/><line x1="45" y1="344.5" x2="48" y2="344.5" stroke="#a0a0a0"/><line x1="1074" y1="344.5" x2="1077" y2="344.5" stroke="#a0a0a0"/><line x1="477.5" y1="115" x2="477.5" y2="120" stroke="#a0a0a0"/><line x1="477.5" y1="671" x2="477.5" y2="676" stroke="#a0a0a0"/><line x1="45" y1="350.5" x2="48" y2="350.5" stroke="#a0a0a0"/><line x1="1074" y1="350.5" x2="1077" y2="350.5" stroke="#a0a0a0"/><line x1="488.5" y1="115" x2="488.5" y2="120" stroke="#a0a0a0"/><line x1="488.5" y1="671" x2="488.5" y2="676" stroke="#a0a0a0"/><line x1="45" y1="355.5" x2="48" y2="355.5" stroke="#a0a0a0"/><line x1="1074" y1="355.5" x2="1077" y2="355.5" stroke="#a0a0a0"/><line x1="498.5" y1="115" x2="498.5" y2="120" stroke="#a0a0a0"/><line x1="498.5" y1="671" x2="498.5" y2="676" stroke="#a0a0a0"/><line x1="45" y1="361.5" x2="48" y2="361.5" stroke="#a0a0a0"/><line x1="1074" y1="361.5" x2="1077" y2="361.5" stroke="#a0a0a0"/><line x1="508.5" y1="115" x2="508.5" y2="125" stroke="#a0a0a0"/><line x1="508.5" y1="666" x2="508.5" y2="676" stroke="#a0a0a0"/><line x1="45" y1="366.5" x2="51" y2="366.5" stroke="#a0a0a0"/><line x1="1071" y1="366.5" x2="1077" y2="366.5" stroke="#a0a0a0"/><line x1="519.5" y1="115" x2="519.5" y2="120" stroke="#a0a0a0"/><line x1="519.5" y1="671" x2="519.5" y2="676" stroke="#a0a0a0"/><line x1="45" y1="372.5" x2="48" y2="372.5" stroke="#a0a0a0"/><line x1="1074" y1="372.5" x2="1077" y2="372.5" stroke="#a0a0a0"/><line x1="529.5" y1="115" x2="529.5" y2="120" stroke="#a0a0a0"/><line x1="529.5" y1="671" x2="529.5" y2="676" stroke="#a0a0a0"/><line x1="45" y1="378.5" x2="48" y2="378.5" stroke="#a0a0a0"/><line x1="1074" y1="378.5" x2="1077" y2="378.5" stroke="#a0a0a0"/><line x1="539.5" y1="115" x2="539.5" y2="120" stroke="#a0a0a0"/><line x1="539.5" y1="671" x2="539.5" y2="676" stroke="#a0a0a0"/><line x1="45" y1="383.5" x2="48" y2="383.5" stroke="#a0a0a0"/><line x1="1074" y1="383.5" x2="1077" y2="383.5" stroke="#a0a0a0"/><line x1="550.5" y1="115" x2="550.5" y2="120" stroke="#a0a0a0"/><line x1="550.5" y1="671" x2="550.5" y2="676" stroke="#a0a0a0"/><line x1="45" y1="389.5" x2="48" y2="389.5" stroke="#a0a0a0"/><line x1="1074" y1="389.5" x2="1077" y2="389.5" stroke="#a0a0a0"/><line x1="560.5" y1="115" x2="560.5" y2="135" stroke="#a0a0a0"/><line x1="560.5" y1="656" x2="560.5" y2="676" stroke="#a0a0a0"/><line x1="45" y1="395.5" x2="57" y2="395.5" stroke="#a0a0a0"/><line x1="1065" y1="395.5" x2="1077" y2="395.5" stroke="#a0a0a0"/><line x1="570.5" y1="115" x2="570.5" y2="120" stroke="#a0a0a0"/><line x1="570.5" y1="671" x2="570.5" y2="676" stroke="#a0a0a0"/><line x1="45" y1="400.5" x2="48" y2="400.5" stroke="#a0a0a0"/><line x1="1074" y1="400.5" x2="1077" y2="400.5" stroke="#a0a0a0"/><line x1="581.5" y1="115" x2="581.5" y2="120" stroke="#a0a0a0"/><line x1="581.5" y1="671" x2="581.5" y2="676" stroke="#a0a0a0"/><line x1="45" y1="406.5" x2="48" y2="406.5" stroke="#a0a0a0"/><line x1="1074" y1="406.5" x2="1077" y2="406.5" stroke="#a0a0a0"/><line x1="591.5" y1="115" x2="591.5" y2="120" stroke="#a0a0a0"/><line x1="591.5" y1="671" x2="591.5" y2="676" stroke="#a0a0a0"/><line x1="45" y1="411.5" x2="48" y2="411.5" stroke="#a0a0a0"/><line x1="1074" y1="411.5" x2="1077" y2="411.5" stroke="#a0a0a0"/><line x1="601.5" y1="115" x2="601.5" y2="120" stroke="#a0a0a0"/><line x1="601.5" y1="671" x2="601.5" y2="676" stroke="#a0a0a0"/><line x1="45" y1="417.5" x2="48" y2="417.5" stroke="#a0a0a0"/><line x1="1074" y1="417.5" x2="1077" y2="417.5" stroke="#a0a0a0"/><line x1="612.5" y1="115" x2="612.5" y2="125" stroke="#a0a0a0"/><line x1="612.5" y1="666" x2="612.5" y2="676" stroke="#a0a0a0"/><line x1="45" y1="423.5" x2="51" y2="423.5" stroke="#a0a0a0"/><line x1="1071" y1="423.5" x2="1077" y2="423.5" stroke="#a0a0a0"/><line x1="622.5" y1="115" x2="622.5" y2="120" stroke="#a0a0a0"/><line x1="622.5" y1="671" x2="622.5" y2="676" stroke="#a0a0a0"/><line x1="45" y1="428.5" x2="48" y2="428.5" stroke="#a0a0a0"/><line x1="1074" y1="428.5" x2="1077" y2="428.5" stroke="#a0a0a0"/><line x1="632.5" y1="115" x2="632.5" y2="120" stroke="#a0a0a0"/><line x1="632.5" y1="671" x2="632.5" y2="676" stroke="#a0a0a0"/><line x1="45" y1="434.5" x2="48" y2="434.5" stroke="#a0a0a0"/><line x1="1074" y1="434.5" x2="1077" y2="434.5" stroke="#a0a0a0"/><line x1="643.5" y1="115" x2="643.5" y2="120" stroke="#a0a0a0"/><line x1="643.5" y1="671" x2="643.5" y2="676" stroke="#a0a0a0"/><line x1="45" y1="439.5" x2="48" y2="439.5" stroke="#a0a0a0"/><line x1="1074" y1="439.5" x2="1077" y2="439.5" stroke="#a0a0a0"/><line x1="653.5" y1="115" x2="653.5" y2="120" stroke="#a0a0a0"/><line x1="653.5" y1="671" x2="653.5" y2="676" stroke="#a0a0a0"/><line x1="45" y1="445.5" x2="48" y2="445.5" stroke="#a0a0a0"/><line x1="1074" y1="445.5" x2="1077" y2="445.5" stroke="#a0a0a0"/><line x1="663.5" y1="115" x2="663.5" y2="135" stroke="#a0a0a0"/><line x1="663.5" y1="656" x2="663.5" y2="676" stroke="#a0a0a0"/><line x1="45" y1="451.5" x2="57" y2="451.5" stroke="#a0a0a0"/><line x1="1065" y1="451.5" x2="1077" y2="451.5" stroke="#a0a0a0"/><line x1="674.5" y1="115" x2="674.5" y2="120" stroke="#a0a0a0"/><line x1="674.5" y1="671" x2="674.5" y2="676" stroke="#a0a0a0"/><line x1="45" y1="456.5" x2="48" y2="456.5" stroke="#a0a0a0"/><line x1="1074" y1="456.5" x2="1077" y2="456.5" stroke="#a0a0a0"/><line x1="684.5" y1="115" x2="684.5" y2="120" stroke="#a0a0a0"/><line x1="684.5" y1="671" x2="684.5" y2="676" stroke="#a0a0a0"/><line x1="45" y1="462.5" x2="48" y2="462.5" stroke="#a0a0a0"/><line x1="1074" y1="462.5" x2="1077" y2="462.5" stroke="#a0a0a0"/><line x1="694.5" y1="115" x2="694.5" y2="120" stroke="#a0a0a0"/><line x1="694.5" y1="671" x2="694.5" y2="676" stroke="#a0a0a0"/><line x1="45" y1="468.5" x2="48" y2="468.5" stroke="#a0a0a0"/><line x1="1074" y1="468.5" x2="1077" y2="468.5" stroke="#a0a0a0"/><line x1="705.5" y1="115" x2="705.5" y2="120" stroke="#a0a0a0"/><line x1="705.5" y1="671" x2="705.5" y2="676" stroke="#a0a0a0"/><line x1="45" y1="473.5" x2="48" y2="473.5" stroke="#a0a0a0"/><line x1="1074" y1="473.5" x2="1077" y2="473.5" stroke="#a0a0a0"/><line x1="715.5" y1="115" x2="715.5" y2="125" stroke="#a0a0a0"/><line x1="715.5" y1="666" x2="715.5" y2="676" stroke="#a0a0a0"/><line x1="45" y1="479.5" x2="51" y2="479.5" stroke="#a0a0a0"/><line x1="1071" y1="479.5" x2="1077" y2="479.5" stroke="#a0a0a0"/><line x1="725.5" y1="115" x2="725.5" y2="120" stroke="#a0a0a0"/><line x1="725.5" y1="671" x2="725.5" y2="676" stroke="#a0a0a0"/><line x1="45" y1="484.5" x2="48" y2="484.5" stroke="#a0a0a0"/><line x1="1074" y1="484.5" x2="1077" y2="484.5" stroke="#a0a0a0"/><line x1="736.5" y1="115" x2="736.5" y2="120" stroke="#a0a0a0"/><line x1="736.5" y1="671" x2="736.5" y2="676" stroke="#a0a0a0"/><line x1="45" y1="490.5" x2="48" y2="490.5" stroke="#a0a0a0"/><line x1="1074" y1="490.5" x2="1077" y2="490.5" stroke="#a0a0a0"/><line x1="746.5" y1="115" x2="746.5" y2="120" stroke="#a0a0a0"/><line x1="746.5" y1="671" x2="746.5" y2="676" stroke="#a0a0a0"/><line x1="45" y1="496.5" x2="48" y2="496.5" stroke="#a0a0a0"/><line x1="1074" y1="496.5" x2="1077" y2="496.5" stroke="#a0a0a0"/><line x1="756.5" y1="115" x2="756.5" y2="120" stroke="#a0a0a0"/><line x1="756.5" y1="671" x2="756.5" y2="676" stroke="#a0a0a0"/><line x1="45" y1="501.5" x2="48" y2="501.5" stroke="#a0a0a0"/><line x1="1074" y1="501.5" x2="1077" y2="501.5" stroke="#a0a0a0"/><line x1="767.5" y1="115" x2="767.5" y2="135" stroke="#a0a0a0"/><line x1="767.5" y1="656" x2="767.5" y2="676" stroke="#a0a0a0"/><line x1="45" y1="507.5" x2="57" y2="507.5" stroke="#a0a0a0"/><line x1="1065" y1="507.5" x2="1077" y2="507.5" stroke="#a0a0a0"/><line x1="777.5" y1="115" x2="777.5" y2="120" stroke="#a0a0a0"/><line x1="777.5" y1="671" x2="777.5" y2="676" stroke="#a0a0a0"/><line x1="45" y1="513.5" x2="48" y2="513.5" stroke="#a0a0a0"/><line x1="1074" y1="513.5" x2="1077" y2="513.5" stroke="#a0a0a0"/><line x1="787.5" y1="115" x2="787.5" y2="120" stroke="#a0a0a0"/><line x1="787.5" y1="671" x2="787.5" y2="676" stroke="#a0a0a0"/><line x1="45" y1="518.5" x2="48" y2="518.5" stroke="#a0a0a0"/><line x1="1074" y1="518.5" x2="1077" y2="518.5" stroke="#a0a0a0"/><line x1="798.5" y1="115" x2="798.5" y2="120" stroke="#a0a0a0"/><line x1="798.5" y1="671" x2="798.5" y2="676" stroke="#a0a0a0"/><line x1="45" y1="524.5" x2="48" y2="524.5" stroke="#a0a0a0"/><line x1="1074" y1="524.5" x2="1077" y2="524.5" stroke="#a0a0a0"/><line x1="808.5" y1="115" x2="808.5" y2="120" stroke="#a0a0a0"/><line x1="808.5" y1="671" x2="808.5" y2="676" stroke="#a0a0a0"/><line x1="45" y1="529.5" x2="48" y2="529.5" stroke="#a0a0a0"/><line x1="1074" y1="529.5" x2="1077" y2="529.5" stroke="#a0a0a0"/><line x1="818.5" y1="115" x2="818.5" y2="125" stroke="#a0a0a0"/><line x1="818.5" y1="666" x2="818.5" y2="676" stroke="#a0a0a0"/><line x1="45" y1="535.5" x2="51" y2="535.5" stroke="#a0a0a0"/><line x1="1071" y1="535.5" x2="1077" y2="535.5" stroke="#a0a0a0"/><line x1="829.5" y1="115" x2="829.5" y2="120" stroke="#a0a0a0"/><line x1="829.5" y1="671" x2="829.5" y2="676" stroke="#a0a0a0"/><line x1="45" y1="541.5" x2="48" y2="541.5" stroke="#a0a0a0"/><line x1="1074" y1="541.5" x2="1077" y2="541.5" stroke="#a0a0a0"/><line x1="839.5" y1="115" x2="839.5" y2="120" stroke="#a0a0a0"/><line x1="839.5" y1="671" x2="839.5" y2="676" stroke="#a0a0a0"/><line x1="45" y1="546.5" x2="48" y2="546.5" stroke="#a0a0a0"/><line x1="1074" y1="546.5" x2="1077" y2="546.5" stroke="#a0a0a0"/><line x1="849.5" y1="115" x2="849.5" y2="120" stroke="#a0a0a0"/><line x1="849.5" y1="671" x2="849.5" y2="676" stroke="#a0a0a0"/><line x1="45" y1="552.5" x2="48" y2="552.5" stroke="#a0a0a0"/><line x1="1074" y1="552.5" x2="1077" y2="552.5" stroke="#a0a0a0"/><line x1="860.5" y1="115" x2="860.5" y2="120" stroke="#a0a0a0"/><line x1="860.5" y1="671" x2="860.5" y2="676" stroke="#a0a0a0"/><line x1="45" y1="557.5" x2="48" y2="557.5" stroke="#a0a0a0"/><line x1="1074" y1="557.5" x2="1077" y2="557.5" stroke="#a0a0a0"/><line x1="870.5" y1="115" x2="870.5" y2="135" stroke="#a0a0a0"/><line x1="870.5" y1="656" x2="870.5" y2="676" stroke="#a0a0a0"/><line x1="45" y1="563.5" x2="57" y2="563.5" stroke="#a0a0a0"/><line x1="1065" y1="563.5" x2="1077" y2="563.5" stroke="#a0a0a0"/><line x1="880.5" y1="115" x2="880.5" y2="120" stroke="#a0a0a0"/><line x1="880.5" y1="671" x2="880.5" y2="676" stroke="#a0a0a0"/><line x1="45" y1="569.5" x2="48" y2="569.5" stroke="#a0a0a0"/><line x1="1074" y1="569.5" x2="1077" y2="569.5" stroke="#a0a0a0"/><line x1="891.5" y1="115" x2="891.5" y2="120" stroke="#a0a0a0"/><line x1="891.5" y1="671" x2="891.5" y2="676" stroke="#a0a0a0"/><line x1="45" y1="574.5" x2="48" y2="574.5" stroke="#a0a0a0"/><line x1="1074" y1="574.5" x2="1077" y2="574.5" stroke="#a0a0a0"/><line x1="901.5" y1="115" x2="901.5" y2="120" stroke="#a0a0a0"/><line x1="901.5" y1="671" x2="901.5" y2="676" stroke="#a0a0a0"/><line x1="45" y1="580.5" x2="48" y2="580.5" stroke="#a0a0a0"/><line x1="1074" y1="580.5" x2="1077" y2="580.5" stroke="#a0a0a0"/><line x1="911.5" y1="115" x2="911.5" y2="120" stroke="#a0a0a0"/><line x1="911.5" y1="671" x2="911.5" y2="676" stroke="#a0a0a0"/><line x1="45" y1="586.5" x2="48" y2="586.5" stroke="#a0a0a0"/><line x1="1074" y1="586.5" x2="1077" y2="586.5" stroke="#a0a0a0"/><line x1="922.5" y1="115" x2="922.5" y2="125" stroke="#a0a0a0"/><line x1="922.5" y1="666" x2="922.5" y2="676" stroke="#a0a0a0"/><line x1="45" y1="591.5" x2="51" y2="591.5" stroke="#a0a0a0"/><line x1="1071" y1="591.5" x2="1077" y2="591.5" stroke="#a0a0a0"/><line x1="932.5" y1="115" x2="932.5" y2="120" stroke="#a0a0a0"/><line x1="932.5" y1="671" x2="932.5" y2="676" stroke="#a0a0a0"/><line x1="45" y1="597.5" x2="48" y2="597.5" stroke="#a0a0a0"/><line x1="1074" y1="597.5" x2="1077" y2="597.5" stroke="#a0a0a0"/><line x1="942.5" y1="115" x2="942.5" y2="120" stroke="#a0a0a0"/><line x1="942.5" y1="671" x2="942.5" y2="676" stroke="#a0a0a0"/><line x1="45" y1="602.5" x2="48" y2="602.5" stroke="#a0a0a0"/><line x1="1074" y1="602.5" x2="1077" y2="602.5" stroke="#a0a0a0"/><line x1="953.5" y1="115" x2="953.5" y2="120" stroke="#a0a0a0"/><line x1="953.5" y1="671" x2="953.5" y2="676" stroke="#a0a0a0"/><line x1="45" y1="608.5" x2="48" y2="608.5" stroke="#a0a0a0"/><line x1="1074" y1="608.5" x2="1077" y2="608.5" stroke="#a0a0a0"/><line x1="963.5" y1="115" x2="963.5" y2="120" stroke="#a0a0a0"/><line x1="963.5" y1="671" x2="963.5" y2="676" stroke="#a0a0a0"/><line x1="45" y1="614.5" x2="48" y2="614.5" stroke="#a0a0a0"/><line x1="1074" y1="614.5" x2="1077" y2="614.5" stroke="#a0a0a0"/><line x1="973.5" y1="115" x2="973.5" y2="135" stroke="#a0a0a0"/><line x1="973.5" y1="656" x2="973.5" y2="676" stroke="#a0a0a0"/><line x1="45" y1="619.5" x2="57" y2="619.5" stroke="#a0a0a0"/><line x1="1065" y1="619.5" x2="1077" y2="619.5" stroke="#a0a0a0"/><line x1="984.5" y1="115" x2="984.5" y2="120" stroke="#a0a0a0"/><line x1="984.5" y1="671" x2="984.5" y2="676" stroke="#a0a0a0"/><line x1="45" y1="625.5" x2="48" y2="625.5" stroke="#a0a0a0"/><line x1="1074" y1="625.5" x2="1077" y2="625.5" stroke="#a0a0a0"/><line x1="994.5" y1="115" x2="994.5" y2="120" stroke="#a0a0a0"/><line x1="994.5" y1="671" x2="994.5" y2="676" stroke="#a0a0a0"/><line x1="45" y1="631.5" x2="48" y2="631.5" stroke="#a0a0a0"/><line x1="1074" y1="631.5" x2="1077" y2="631.5" stroke="#a0a0a0"/><line x1="1004.5" y1="115" x2="1004.5" y2="120" stroke="#a0a0a0"/><line x1="1004.5" y1="671" x2="1004.5" y2="676" stroke="#a0a0a0"/><line x1="45" y1="636.5" x2="48" y2="636.5" stroke="#a0a0a0"/><line x1="1074" y1="636.5" x2="1077" y2="636.5" stroke="#a0a0a0"/><line x1="1015.5" y1="115" x2="1015.5" y2="120" stroke="#a0a0a0"/><line x1="1015.5" y1="671" x2="1015.5" y2="676" stroke="#a0a0a0"/><line x1="45" y1="642.5" x2="48" y2="642.5" stroke="#a0a0a0"/><line x1="1074" y1="642.5" x2="1077" y2="642.5" stroke="#a0a0a0"/><line x1="1025.5" y1="115" x2="1025.5" y2="125" stroke="#a0a0a0"/><line x1="1025.5" y1="666" x2="1025.5" y2="676" stroke="#a0a0a0"/><line x1="45" y1="647.5" x2="51" y2="647.5" stroke="#a0a0a0"/><line x1="1071" y1="647.5" x2="1077" y2="647.5" stroke="#a0a0a0"/><line x1="1035.5" y1="115" x2="1035.5" y2="120" stroke="#a0a0a0"/><line x1="1035.5" y1="671" x2="1035.5" y2="676" stroke="#a0a0a0"/><line x1="45" y1="653.5" x2="48" y2="653.5" stroke="#a0a0a0"/><line x1="1074" y1="653.5" x2="1077" y2="653.5" stroke="#a0a0a0"/><line x1="1046.5" y1="115" x2="1046.5" y2="120" stroke="#a0a0a0"/><line x1="1046.5" y1="671" x2="1046.5" y2="676" stroke="#a0a0a0"/><line x1="45" y1="659.5" x2="48" y2="659.5" stroke="#a0a0a0"/><line x1="1074" y1="659.5" x2="1077" y2="659.5" stroke="#a0a0a0"/><line x1="1056.5" y1="115" x2="1056.5" y2="120" stroke="#a0a0a0"/><line x1="1056.5" y1="671" x2="1056.5" y2="676" stroke="#a0a0a0"/><line x1="45" y1="664.5" x2="48" y2="664.5" stroke="#a0a0a0"/><line x1="1074" y1="664.5" x2="1077" y2="664.5" stroke="#a0a0a0"/><line x1="1066.5" y1="115" x2="1066.5" y2="120" stroke="#a0a0a0"/><line x1="1066.5" y1="671" x2="1066.5" y2="676" stroke="#a0a0a0"/><line x1="45" y1="670.5" x2="48" y2="670.5" stroke="#a0a0a0"/><line x1="1074" y1="670.5" x2="1077" y2="670.5" stroke="#a0a0a0"/></svg>
<svg style="left:0;top:0" width="1100" height="699" shape-rendering="crispEdges"><path d="M45.0,297.1 L46.5,296.1 L48.0,295.3 L49.5,294.9 L51.0,294.4 L52.5,295.0 L54.0,294.2 L55.5,295.7 L57.0,297.2 L58.5,297.3 L60.0,297.9 L61.5,296.5 L63.0,296.6 L64.5,295.7 L66.0,295.8 L67.5,295.7 L69.0,295.0 L70.5,295.9 L72.0,296.8 L73.5,298.7 L75.0,299.2 L76.5,298.6 L78.0,299.5 L79.5,297.9 L81.0,297.7 L82.5,295.8 L84.0,294.6 L85.5,295.2 L87.0,293.8 L88.5,293.9 L90.0,295.6 L91.5,296.2 L93.0,295.9 L94.5,297.5 L96.0,297.1 L97.5,297.2 L99.0,296.0 L100.5,296.6 L102.0,295.7 L103.5,295.9 L105.0,296.0 L106.5,295.5 L108.0,296.5 L109.5,297.1 L111.0,298.0 L112.5,298.4 L114.0,298.9 L115.5,299.1 L117.0,297.3 L118.5,297.4 L120.0,295.8 L121.5,294.9 L123.0,295.2 L124.5,294.6 L126.0,294.7 L127.5,295.5 L129.0,296.5 L130.5,296.0 L132.0,297.7 L133.5,296.0 L135.0,296.8 L136.5,296.3 L138.0,294.4" fill="none" stroke="#ecc10a" stroke-width="5.2" stroke-linejoin="round"/><path d="M655.5,297.2 L657.0,296.6 L658.5,297.2 L660.0,298.5 L661.5,297.7 L663.0,296.3 L664.5,295.2 L666.0,295.6 L667.5,294.4 L669.0,294.3 L670.5,293.3 L672.0,294.6 L673.5,295.1 L675.0,296.0 L676.5,297.1 L678.0,298.3 L679.5,298.2 L681.0,298.1 L682.5,297.2 L684.0,297.7 L685.5,296.8 L687.0,296.7 L688.5,296.0 L690.0,297.0 L691.5,297.0" fill="none" stroke="#ecc10a" stroke-width="3.6" stroke-linejoin="round"/><path d="M985.5,298.3 L987.0,297.7 L988.5,299.0 L990.0,298.8 L991.5,299.0 L993.0,297.5 L994.5,296.5 L996.0,295.9 L997.5,295.4 L999.0,296.0 L1000.5,296.0 L1002.0,297.1 L1003.5,296.8 L1005.0,297.3 L1006.5,297.1 L1008.0,297.9 L1009.5,297.0 L1011.0,296.1 L1012.5,294.8 L1014.0,293.9 L1015.5,293.2 L1017.0,294.6 L1018.5,294.8 L1020.0,295.0 L1021.5,296.3 L1023.0,297.2 L1024.5,298.8 L1026.0,299.3 L1027.5,297.9 L1029.0,298.3 L1030.5,296.8 L1032.0,296.8 L1033.5,296.7 L1035.0,296.3 L1036.5,296.8 L1038.0,296.7 L1039.5,296.6 L1041.0,297.9 L1042.5,298.1 L1044.0,297.1 L1045.5,296.7 L1047.0,295.7 L1048.5,294.3 L1050.0,293.9 L1051.5,293.6 L1053.0,293.8 L1054.5,294.6 L1056.0,295.0 L1057.5,297.0 L1059.0,297.7 L1060.5,298.6 L1062.0,298.6 L1063.5,298.4 L1065.0,297.8 L1066.5,297.6 L1068.0,296.3 L1069.5,296.3 L1071.0,296.4 L1072.5,296.4 L1074.0,296.6 L1075.5,296.9 L1077.0,297.4" fill="none" stroke="#ecc10a" stroke-width="3.6" stroke-linejoin="round"/><path d="M44.0,297.0 L46.3,294.8 L48.9,298.0 L51.6,296.3 L54.0,312.0 L56.7,294.7 L59.9,298.2 L63.3,296.3 L66.2,297.6 L69.1,295.4 L72.0,307.0 L74.9,294.2 L77.7,298.1 L80.6,296.3 L83.5,298.7 L86.0,295.8 L89.0,307.0 L92.4,296.3 L95.5,297.8 L98.6,294.1 L101.6,299.2 L104.8,295.6 L108.0,311.0 L110.9,296.2 L113.1,298.2 L116.3,295.2 L118.7,297.5 L121.3,296.3 L124.0,323.0 L126.4,294.7 L129.0,307.0 L132.4,294.2 L135.8,298.2 L139.0,278.0 L142.0,355.0 L144.0,260.6 L145.9,305.8 L147.4,289.2 L149.0,311.0 L151.9,282.5 L154.6,302.0 L157.0,277.0 L159.6,339.0 L161.0,273.0 L164.0,323.0 L167.1,293.3 L170.2,313.1 L173.0,280.0 L176.4,326.0 L179.0,268.0 L181.6,379.0 L183.6,274.6 L186.6,308.3 L190.1,286.9 L193.0,307.0 L197.0,269.0 L199.0,368.0 L201.0,260.6 L204.4,306.0 L207.2,287.0 L210.5,309.0 L213.6,271.0 L216.0,363.0 L218.0,264.0 L221.4,317.6 L225.0,284.6 L229.0,306.0 L231.6,246.0 L234.0,406.0 L236.0,244.0 L239.6,336.0 L243.0,269.0 L246.0,313.0 L250.0,212.0 L253.0,469.0 L255.0,228.0 L258.0,347.0 L261.6,257.0 L265.0,301.6 L268.0,241.0 L270.6,430.0 L273.0,246.0 L277.0,316.0 L280.0,276.0 L282.6,301.5 L285.0,275.0 L288.0,351.0 L290.0,278.0 L292.1,313.7 L294.0,283.0 L298.2,322.9 L302.0,270.0 L304.4,361.0 L306.4,266.0 L310.0,351.0 L312.0,274.0 L316.0,316.0 L320.4,271.0 L323.0,362.0 L325.4,266.0 L328.0,317.0 L331.0,280.0 L333.7,309.6 L336.2,291.6 L339.0,310.0 L342.4,271.0 L344.4,359.0 L347.0,264.0 L350.0,319.0 L354.0,274.0 L357.0,332.0 L360.0,264.0 L363.0,366.0 L365.6,275.0 L369.0,301.0 L372.0,283.0 L374.6,306.6 L377.0,284.0 L379.0,326.0 L382.0,285.0 L384.0,315.0 L385.5,284.7 L387.4,301.5 L389.0,279.0 L392.0,304.7 L395.6,246.0 L397.6,448.0 L400.0,257.0 L403.6,333.0 L407.6,272.0 L409.2,319.8 L411.0,281.0 L412.8,312.3 L414.0,289.2 L415.6,358.0 L417.0,280.0 L420.1,306.0 L423.0,283.1 L426.0,305.0 L429.0,281.0 L432.0,335.0 L434.0,280.0 L437.0,316.0 L440.0,290.0 L444.3,310.0 L448.0,273.0 L450.0,353.0 L452.4,272.0 L455.0,342.0 L458.0,280.0 L462.0,309.0 L466.0,280.0 L468.0,332.0 L471.0,277.0 L473.0,324.0 L477.0,283.0 L480.0,302.7 L483.0,290.0 L487.0,308.0 L490.0,290.0 L492.1,301.2 L494.8,284.5 L496.8,305.9 L499.0,290.0 L501.4,304.5 L504.0,283.0 L507.0,323.0 L509.0,285.0 L512.0,309.0 L516.0,286.0 L518.9,304.9 L522.4,277.0 L525.0,350.0 L527.4,276.0 L530.0,316.0 L534.0,282.0 L537.1,305.4 L540.0,276.0 L542.4,356.0 L544.0,277.0 L548.0,318.0 L551.1,286.3 L554.0,305.0 L558.0,270.0 L560.0,360.0 L563.0,272.0 L566.0,322.0 L569.1,293.0 L572.0,313.0 L575.6,268.0 L578.0,359.0 L580.0,277.0 L583.0,327.0 L586.1,291.9 L589.0,311.0 L593.0,275.0 L595.6,346.0 L598.0,275.0 L600.6,342.0 L604.0,282.0 L606.0,305.0 L609.2,289.1 L613.0,331.0 L616.0,280.0 L618.6,332.0 L621.0,284.0 L625.0,309.0 L628.0,284.0 L631.0,315.0 L633.0,279.0 L636.4,325.0 L639.0,285.0 L642.0,307.0 L645.0,286.0 L648.0,306.0 L650.0,289.0 L654.0,311.0 L657.1,288.8 L660.0,304.0 L664.0,293.0 L665.9,299.4 L668.1,295.2 L670.0,306.0 L672.8,294.0 L675.6,301.5 L678.4,295.7 L681.5,298.1 L684.2,292.1 L687.0,318.0 L690.0,283.0 L694.0,311.0 L696.9,289.3 L700.2,302.9 L703.0,283.0 L705.0,329.0 L708.0,284.0 L712.0,313.0 L714.8,291.5 L718.0,305.0 L721.0,288.0 L723.6,317.0 L726.4,290.2 L729.0,308.0 L731.5,288.5 L734.4,301.9 L737.0,294.0 L739.3,313.5 L742.0,290.0 L745.0,311.0 L748.6,286.2 L751.5,302.3 L755.0,289.0 L757.0,311.0 L760.0,279.4 L763.0,328.0 L766.0,287.0 L768.0,307.0 L770.5,292.8 L773.0,303.0 L774.9,285.2 L776.1,307.5 L778.0,289.0 L780.0,306.0 L783.0,292.7 L785.8,301.6 L788.2,287.8 L791.4,309.2 L794.0,290.0 L794.9,303.9 L796.0,290.0 L797.5,303.9 L799.0,290.0 L801.7,306.3 L803.6,284.8 L806.5,304.0 L808.7,292.0 L811.4,308.4 L813.6,285.0 L815.6,326.0 L818.0,286.0 L821.1,314.7 L824.1,291.8 L826.9,303.1 L830.0,291.0 L834.0,309.0 L836.4,291.2 L839.2,306.7 L841.9,294.7 L844.5,302.4 L847.1,284.2 L849.7,311.0 L852.0,290.0 L855.0,314.0 L858.0,289.0 L861.2,304.7 L865.0,287.0 L868.0,315.0 L870.0,285.0 L873.0,316.0 L876.0,290.0 L879.3,302.2 L883.0,290.0 L885.6,307.0 L888.0,286.4 L890.6,317.0 L894.0,291.0 L896.9,308.2 L900.1,294.5 L902.9,301.0 L906.0,291.0 L908.0,307.0 L910.8,287.9 L913.6,303.1 L916.6,292.5 L919.2,301.7 L922.5,289.6 L925.3,301.0 L928.0,293.0 L931.0,309.0 L933.7,294.0 L936.1,299.0 L939.0,290.0 L942.0,311.0 L945.0,289.4 L947.4,303.8 L950.0,291.0 L952.7,299.0 L954.7,294.8 L957.3,300.6 L960.0,294.0 L962.0,303.5 L963.1,295.0 L965.0,308.0 L967.9,295.4 L970.9,302.9 L974.1,292.7 L976.8,299.1 L979.8,294.7 L983.0,306.0 L986.0,294.0 L988.6,299.5 L991.7,295.7 L994.8,298.1 L997.7,293.6 L1000.4,299.8 L1003.4,295.3 L1006.2,298.7 L1009.2,295.1 L1012.1,299.9 L1014.7,296.1 L1017.9,298.3 L1021.1,294.6 L1024.0,300.4 L1026.5,295.7 L1029.3,298.7 L1032.6,294.2 L1035.5,299.5 L1038.4,296.1 L1040.9,298.0 L1043.8,295.2 L1047.2,298.6 L1049.7,296.2 L1053.0,297.9 L1055.4,294.5 L1058.4,299.6 L1061.6,296.0 L1064.7,297.9 L1067.5,295.6 L1070.4,299.3 L1073.3,296.3 L1076.2,298.4 L1079.0,297.0" fill="none" stroke="#ecc10a" stroke-width="2" stroke-linejoin="round"/><path d="M45.0,497.4 L46.5,497.0 L48.0,496.4 L49.5,495.7 L51.0,494.7 L52.5,495.4 L54.0,494.9 L55.5,496.0 L57.0,496.0 L58.5,497.4 L60.0,497.6 L61.5,497.8 L63.0,497.2 L64.5,496.1 L66.0,495.2 L67.5,494.0 L69.0,493.1 L70.5,492.2 L72.0,492.7 L73.5,493.7 L75.0,493.8 L76.5,495.7 L78.0,496.0 L79.5,496.4 L81.0,496.1 L82.5,496.3 L84.0,495.5 L85.5,495.5 L87.0,495.2 L88.5,494.9 L90.0,494.7 L91.5,494.9 L93.0,495.4 L94.5,497.1 L96.0,497.8 L97.5,498.5 L99.0,498.2 L100.5,498.5 L102.0,496.9 L103.5,496.0 L105.0,494.8 L106.5,494.3 L108.0,494.1 L109.5,493.1 L111.0,493.9 L112.5,494.7 L114.0,494.8 L115.5,495.2 L117.0,496.2 L118.5,496.5 L120.0,496.1 L121.5,495.3 L123.0,494.1 L124.5,493.5 L126.0,493.2 L127.5,493.7 L129.0,493.6 L130.5,494.4 L132.0,495.9 L133.5,497.5 L135.0,497.4 L136.5,497.6 L138.0,497.7 L139.5,497.8 L141.0,497.0 L142.5,495.7 L144.0,494.9 L145.5,494.9 L147.0,494.9 L148.5,495.2 L150.0,495.8 L151.5,495.7 L153.0,496.7 L154.5,497.4 L156.0,497.4 L157.5,496.0 L159.0,495.8 L160.5,494.5 L162.0,493.9 L163.5,492.4 L165.0,492.7 L166.5,493.2 L168.0,493.5 L169.5,494.0 L171.0,495.1 L172.5,496.0 L174.0,496.4 L175.5,496.6 L177.0,496.9 L178.5,495.7 L180.0,495.9 L181.5,495.3 L183.0,495.1 L184.5,495.2 L186.0,495.6 L187.5,496.6 L189.0,497.5 L190.5,497.9 L192.0,498.7 L193.5,497.6 L195.0,497.2 L196.5,496.2 L198.0,495.3 L199.5,494.4 L201.0,493.6 L202.5,493.4 L204.0,493.4 L205.5,493.0 L207.0,494.1 L208.5,495.1 L210.0,495.5 L211.5,495.6 L213.0,496.2 L214.5,495.6" fill="none" stroke="#14a8e6" stroke-width="3.6" stroke-linejoin="round"/><path d="M640.5,496.6 L642.0,496.6 L643.5,497.8 L645.0,498.1 L646.5,499.0 L648.0,498.3 L649.5,497.5 L651.0,496.1 L652.5,494.6 L654.0,494.3 L655.5,493.8 L657.0,493.6 L658.5,494.7 L660.0,495.0 L661.5,495.4 L663.0,496.3 L664.5,496.9 L666.0,496.5 L667.5,495.2 L669.0,493.9 L670.5,493.9 L672.0,492.5 L673.5,492.8 L675.0,492.5 L676.5,494.3 L678.0,494.8 L679.5,495.8 L681.0,496.6 L682.5,497.6 L684.0,498.3 L685.5,497.5 L687.0,496.7 L688.5,496.3 L690.0,496.0 L691.5,494.9 L693.0,495.1 L694.5,495.6 L696.0,495.5 L697.5,496.8 L699.0,497.1" fill="none" stroke="#14a8e6" stroke-width="2.6" stroke-linejoin="round"/><path d="M900.0,492.4 L901.5,492.6 L903.0,493.8 L904.5,494.4 L906.0,495.2 L907.5,497.1 L909.0,497.6 L910.5,497.5 L912.0,496.7 L913.5,496.3 L915.0,495.7 L916.5,495.1 L918.0,494.3 L919.5,494.8 L921.0,495.6 L922.5,496.3 L924.0,497.3 L925.5,497.8 L927.0,498.3 L928.5,498.4 L930.0,498.0 L931.5,497.0 L933.0,495.4 L934.5,494.6 L936.0,493.7 L937.5,493.5 L939.0,493.2 L940.5,493.3 L942.0,493.7 L943.5,494.7 L945.0,495.3 L946.5,496.3 L948.0,496.5 L949.5,495.5 L951.0,495.3 L952.5,495.0 L954.0,493.9 L955.5,493.3 L957.0,494.0 L958.5,494.3 L960.0,494.9 L961.5,496.2 L963.0,496.9 L964.5,497.8 L966.0,498.4 L967.5,497.8 L969.0,497.1 L970.5,496.8 L972.0,496.3 L973.5,495.3 L975.0,494.1 L976.5,494.7 L978.0,493.9 L979.5,494.6 L981.0,495.0 L982.5,495.7 L984.0,496.6 L985.5,496.6 L987.0,495.8 L988.5,495.3 L990.0,494.0 L991.5,493.8 L993.0,492.9 L994.5,492.7 L996.0,492.7 L997.5,493.9 L999.0,495.0 L1000.5,496.5 L1002.0,496.7 L1003.5,497.3 L1005.0,498.0 L1006.5,496.8 L1008.0,496.7 L1009.5,495.6 L1011.0,495.5 L1012.5,495.1 L1014.0,494.5 L1015.5,495.6 L1017.0,495.9 L1018.5,496.6 L1020.0,497.8 L1021.5,498.0 L1023.0,497.3 L1024.5,497.2 L1026.0,495.6 L1027.5,495.0 L1029.0,493.4 L1030.5,493.2 L1032.0,493.2 L1033.5,493.0 L1035.0,492.8 L1036.5,494.2 L1038.0,495.0 L1039.5,495.8 L1041.0,495.9 L1042.5,496.1 L1044.0,496.0 L1045.5,495.0 L1047.0,495.1 L1048.5,494.1 L1050.0,493.9 L1051.5,493.9 L1053.0,494.7 L1054.5,496.4 L1056.0,496.6 L1057.5,497.3 L1059.0,498.2 L1060.5,499.0 L1062.0,497.6 L1063.5,497.2 L1065.0,496.0 L1066.5,495.5 L1068.0,494.4 L1069.5,493.4 L1071.0,494.2 L1072.5,493.9 L1074.0,494.9 L1075.5,495.3 L1077.0,496.4" fill="none" stroke="#14a8e6" stroke-width="3.2" stroke-linejoin="round"/><path d="M44.0,498.2 L47.0,493.7 L50.3,496.5 L53.0,492.7 L55.8,498.5 L59.1,494.3 L61.8,498.8 L64.8,494.2 L68.1,495.1 L71.3,488.1 L74.1,495.4 L76.8,494.3 L80.0,498.9 L82.8,494.4 L85.7,496.4 L89.0,492.3 L92.0,498.5 L95.0,493.7 L98.0,500.3 L101.3,495.3 L104.2,498.9 L106.9,491.4 L109.9,494.1 L113.2,493.4 L116.2,499.2 L119.3,492.1 L121.7,496.5 L125.2,491.1 L128.3,495.8 L130.7,491.4 L134.2,498.8 L136.8,497.3 L140.3,501.5 L142.8,493.0 L145.8,495.7 L149.2,493.5 L152.0,499.5 L154.8,493.8 L157.8,498.1 L160.8,492.6 L163.8,495.1 L167.3,488.5 L169.9,497.5 L172.8,495.0 L176.2,500.8 L178.8,491.8 L181.8,495.9 L185.2,493.3 L187.9,498.7 L190.8,494.3 L193.8,500.8 L196.9,494.5 L200.3,497.0 L203.0,488.3 L205.8,494.9 L209.2,493.2 L211.8,500.3 L215.1,489.4 L217.8,498.6 L221.2,489.8 L224.0,498.2 L226.7,489.8 L229.8,502.2 L232.9,495.1 L236.1,502.7 L238.8,487.0 L241.7,497.8 L245.0,490.6 L248.1,502.6 L251.3,492.2 L253.7,497.7 L257.0,490.8 L259.8,498.8 L263.0,489.8 L265.9,502.0 L269.3,494.0 L272.1,503.5 L274.8,492.1 L277.7,498.4 L281.1,492.2 L283.7,504.2 L287.0,491.9 L289.9,502.3 L292.7,491.5 L296.1,499.5 L299.1,487.5 L302.2,498.2 L304.9,493.7 L308.2,503.9 L311.0,488.9 L314.2,497.3 L317.1,491.3 L320.0,501.8 L322.7,493.1 L326.3,502.1 L329.1,495.0 L332.1,500.8 L335.0,487.2 L337.8,498.4 L340.7,492.6 L344.0,500.8 L347.1,490.9 L350.1,496.8 L352.9,490.9 L355.9,500.0 L358.8,492.1 L362.2,502.0 L365.0,494.0 L367.9,502.2 L370.8,490.4 L374.2,498.3 L377.2,494.4 L380.0,502.8 L382.8,492.5 L386.2,499.5 L389.1,488.7 L391.9,496.1 L395.0,489.9 L397.8,498.3 L401.1,494.7 L403.9,503.5 L407.3,489.5 L409.7,496.2 L413.2,493.5 L416.1,503.2 L418.9,493.2 L421.7,499.9 L425.0,494.0 L428.2,498.0 L430.8,490.0 L434.1,498.4 L437.1,493.0 L440.2,503.1 L443.1,490.8 L446.0,494.8 L448.7,490.8 L452.1,499.8 L454.9,493.2 L458.1,502.1 L461.1,493.6 L463.9,501.6 L467.2,491.2 L470.3,498.5 L472.8,494.6 L476.1,505.0 L478.9,490.7 L482.2,497.6 L485.3,489.1 L488.1,497.1 L491.1,489.7 L494.1,500.2 L496.8,494.2 L500.3,503.3 L503.0,488.1 L505.9,499.3 L509.2,494.2 L511.7,503.4 L515.0,492.8 L518.0,497.8 L521.2,492.0 L524.2,497.2 L526.9,487.7 L529.8,498.2 L533.0,492.9 L536.2,501.2 L539.3,489.0 L542.3,495.2 L544.8,491.6 L547.9,507.3 L551.1,490.3 L554.2,504.8 L556.9,490.6 L560.2,509.5 L562.8,481.9 L566.3,502.0 L569.0,493.3 L572.0,509.5 L575.1,487.3 L578.3,500.2 L580.9,484.4 L584.0,506.2 L587.1,490.4 L590.0,503.2 L593.3,490.1 L595.9,507.8 L598.8,484.2 L602.2,506.2 L605.0,492.1 L607.8,511.1 L611.3,489.5 L614.2,497.8 L616.8,488.7 L620.1,504.4 L622.9,483.1 L625.8,505.6 L628.8,489.8 L631.9,503.3 L635.0,485.3 L637.9,498.4 L641.0,493.8 L643.8,507.3 L647.1,491.9 L650.2,500.4 L653.2,491.6 L656.1,500.2 L659.2,490.4 L661.9,499.8 L664.8,492.6 L668.2,499.2 L670.8,485.3 L673.9,494.7 L677.2,490.2 L680.2,500.3 L682.9,491.2 L685.7,499.8 L689.1,491.9 L692.3,499.4 L695.0,484.7 L698.0,503.4 L700.8,493.5 L703.8,504.6 L707.0,483.5 L710.0,496.9 L712.8,488.0 L716.2,512.0 L719.3,487.8 L721.7,507.2 L725.0,486.9 L727.9,505.5 L731.0,483.6 L734.1,499.4 L737.1,491.1 L739.8,511.1 L743.1,486.1 L745.8,500.8 L749.0,488.8 L752.2,507.7 L755.1,481.7 L758.1,501.7 L761.1,490.4 L764.3,509.0 L766.9,477.0 L770.1,502.3 L773.2,489.3 L776.2,512.2 L779.1,485.5 L782.2,501.8 L785.1,491.3 L787.9,506.2 L790.7,485.1 L794.1,505.2 L796.8,488.1 L800.1,504.9 L803.1,482.1 L806.0,497.0 L809.3,487.7 L812.1,509.8 L815.3,489.9 L818.1,505.1 L820.9,488.9 L823.7,502.3 L826.9,487.9 L829.9,503.9 L833.0,493.5 L836.3,510.0 L839.3,483.0 L842.2,498.0 L845.1,484.9 L847.7,507.8 L850.8,486.1 L853.8,501.5 L857.1,491.6 L860.3,503.8 L863.0,481.3 L865.9,500.6 L869.1,490.7 L871.9,510.4 L874.9,491.6 L877.8,498.9 L880.8,488.4 L883.9,508.9 L887.1,489.2 L890.3,505.8 L892.7,488.3 L896.0,502.2 L899.3,485.7 L902.0,497.4 L905.1,491.6 L908.3,505.0 L911.1,492.9 L914.1,499.5 L916.8,492.2 L920.0,498.2 L923.0,489.9 L926.0,500.0 L929.0,495.7 L932.2,501.6 L935.3,485.8 L938.1,494.9 L940.8,488.9 L944.2,500.2 L946.9,492.5 L950.1,498.1 L953.1,491.6 L956.2,496.8 L958.8,487.5 L962.2,500.3 L964.7,496.8 L967.9,501.7 L971.1,493.7 L974.0,495.3 L976.8,492.0 L980.0,498.4 L982.9,493.3 L985.8,498.1 L989.1,492.1 L991.7,494.7 L995.2,489.2 L998.2,495.3 L1001.0,495.5 L1004.2,500.7 L1007.1,492.7 L1009.9,497.4 L1013.1,491.9 L1016.0,497.7 L1018.8,493.2 L1021.7,499.0 L1025.0,495.5 L1028.1,496.8 L1031.2,490.2 L1033.8,494.5 L1036.7,492.6 L1040.1,499.5 L1042.9,494.5 L1045.9,496.9 L1048.9,492.9 L1052.1,497.2 L1055.3,491.9 L1058.2,500.1 L1061.2,497.1 L1063.9,499.7 L1067.3,490.6 L1069.8,494.6 L1072.9,492.7 L1075.9,498.4 L1079.0,496.6" fill="none" stroke="#14a8e6" stroke-width="2.3" stroke-linejoin="round"/></svg>
<svg style="left:0;top:0" width="1100" height="699" shape-rendering="crispEdges"><path d="M1099,271 H1097 V272 H1099 Z M1099,272 H1097 V273 H1099 Z M1099,273 H1097 V274 H1099 Z M1099,274 H1097 V275 H1099 Z M1099,275 H1097 V276 H1099 Z M1099,276 H1097 V277 H1099 Z M1099,277 H1096 V278 H1099 Z M1099,278 H1096 V279 H1099 Z M1099,279 H1096 V280 H1099 Z M1099,280 H1095 V281 H1099 Z M1099,281 H1095 V282 H1099 Z M1099,282 H1094 V283 H1099 Z M1099,283 H1094 V284 H1099 Z M1099,284 H1093 V285 H1099 Z M1099,285 H1093 V286 H1099 Z M1099,286 H1092 V287 H1099 Z M1099,287 H1091 V288 H1099 Z M1099,288 H1090 V289 H1099 Z M1099,289 H1089 V290 H1099 Z M1099,290 H1088 V291 H1099 Z M1099,291 H1087 V292 H1099 Z M1099,292 H1086 V293 H1099 Z M1099,293 H1085 V294 H1099 Z M1099,294 H1084 V295 H1099 Z M1099,295 H1083 V296 H1099 Z M1099,296 H1082 V297 H1099 Z M1099,297 H1081 V298 H1099 Z M1099,298 H1080 V299 H1099 Z M1099,299 H1079 V300 H1099 Z M1099,300 H1079 V301 H1099 Z M1099,301 H1080 V302 H1099 Z M1099,302 H1082 V303 H1099 Z M1099,303 H1085 V304 H1099 Z M1099,304 H1086 V305 H1099 Z M1099,305 H1088 V306 H1099 Z M1099,306 H1089 V307 H1099 Z M1099,307 H1091 V308 H1099 Z M1099,308 H1091 V309 H1099 Z M1099,309 H1092 V310 H1099 Z M1099,310 H1093 V311 H1099 Z M1099,311 H1093 V312 H1099 Z M1099,312 H1094 V313 H1099 Z M1099,313 H1095 V314 H1099 Z M1099,314 H1095 V315 H1099 Z M1099,315 H1095 V316 H1099 Z M1099,316 H1096 V317 H1099 Z M1099,317 H1096 V318 H1099 Z M1099,318 H1096 V319 H1099 Z M1099,319 H1097 V320 H1099 Z M1099,320 H1097 V321 H1099 Z M1099,321 H1097 V322 H1099 Z M1099,322 H1097 V323 H1099 Z M1099,323 H1097 V324 H1099 Z M1099,324 H1097 V325 H1099 Z M1099,325 H1097 V326 H1099 Z M1099,326 H1098 V327 H1099 Z M1099,327 H1098 V328 H1099 Z " fill="#e2b600"/><path d="M1099,483 H1098 V484 H1099 Z M1099,484 H1097 V485 H1099 Z M1099,485 H1096 V486 H1099 Z M1099,486 H1096 V487 H1099 Z M1099,487 H1096 V488 H1099 Z M1099,488 H1095 V489 H1099 Z M1099,489 H1093 V490 H1099 Z M1099,490 H1092 V491 H1099 Z M1099,491 H1090 V492 H1099 Z M1099,492 H1088 V493 H1099 Z M1099,493 H1085 V494 H1099 Z M1099,494 H1083 V495 H1099 Z M1099,495 H1081 V496 H1099 Z M1099,496 H1079 V497 H1099 Z M1099,497 H1078 V498 H1099 Z M1099,498 H1079 V499 H1099 Z M1099,499 H1081 V500 H1099 Z M1099,500 H1083 V501 H1099 Z M1099,501 H1087 V502 H1099 Z M1099,502 H1089 V503 H1099 Z M1099,503 H1091 V504 H1099 Z M1099,504 H1092 V505 H1099 Z M1099,505 H1093 V506 H1099 Z M1099,506 H1094 V507 H1099 Z M1099,507 H1094 V508 H1099 Z M1099,508 H1095 V509 H1099 Z M1099,509 H1096 V510 H1099 Z M1099,510 H1096 V511 H1099 Z M1099,511 H1096 V512 H1099 Z M1099,512 H1097 V513 H1099 Z M1099,513 H1097 V514 H1099 Z " fill="#10a0dc"/><rect x="1097" y="246" width="2" height="124" fill="#f0c400"/><rect x="1097" y="214" width="2" height="2" fill="#f0c400"/><rect x="1097" y="218" width="2" height="1" fill="#f0c400"/><rect x="1097" y="221" width="2" height="5" fill="#f0c400"/><rect x="1097" y="229" width="2" height="1" fill="#f0c400"/><rect x="1097" y="233" width="2" height="8" fill="#f0c400"/><rect x="1097" y="243" width="2" height="2" fill="#f0c400"/><rect x="1097" y="372" width="2" height="3" fill="#f0c400"/><rect x="1097" y="377" width="2" height="2" fill="#f0c400"/><rect x="1097" y="382" width="2" height="5" fill="#f0c400"/><rect x="1097" y="390" width="2" height="2" fill="#f0c400"/><rect x="1097" y="395" width="2" height="3" fill="#f0c400"/><rect x="1097" y="401" width="2" height="1" fill="#f0c400"/><rect x="1097" y="406" width="2" height="4" fill="#f0c400"/><rect x="1097" y="413" width="2" height="1" fill="#f0c400"/><rect x="1097" y="418" width="2" height="2" fill="#f0c400"/><rect x="1097" y="424" width="2" height="3" fill="#f0c400"/><rect x="1097" y="431" width="2" height="1" fill="#f0c400"/><rect x="1097" y="436" width="2" height="2" fill="#f0c400"/><rect x="1097" y="441" width="2" height="1" fill="#f0c400"/><rect x="1097" y="445" width="2" height="1" fill="#f0c400"/><rect x="1097" y="453" width="2" height="1" fill="#f0c400"/><rect x="1097" y="459" width="2" height="1" fill="#f0c400"/><rect x="1097" y="465" width="2" height="2" fill="#f0c400"/><rect x="1097" y="469" width="2" height="2" fill="#f0c400"/></svg>
<svg style="left:0;top:0" width="1" height="1"><path d="M244,114.5 H257 L250.5,127 Z" fill="#fff"/><path d="M1077.5,220 V232 L1066,226 Z" fill="#ffd800"/><path d="M45,670.2 L57,676 H45 Z" fill="#ffd800"/></svg>
<span class="t" style="left:2.70px;top:113.84px;font-size:12px;line-height:12px;color:#ffd800;transform:scaleX(0.7374);transform-origin:0 0;-webkit-text-stroke:0.3px #ffd800;">2.4</span>
<span class="t" style="left:2.70px;top:168.87px;font-size:12px;line-height:12px;color:#ffd800;transform:scaleX(0.8135);transform-origin:0 0;-webkit-text-stroke:0.3px #ffd800;">2.35</span>
<span class="t" style="left:2.70px;top:223.90px;font-size:12px;line-height:12px;color:#ffd800;transform:scaleX(0.7374);transform-origin:0 0;-webkit-text-stroke:0.3px #ffd800;">2.3</span>
<span class="t" style="left:2.70px;top:278.93px;font-size:12px;line-height:12px;color:#ffd800;transform:scaleX(0.8135);transform-origin:0 0;-webkit-text-stroke:0.3px #ffd800;">2.25</span>
<span class="t" style="left:2.70px;top:333.96px;font-size:12px;line-height:12px;color:#ffd800;transform:scaleX(0.7374);transform-origin:0 0;-webkit-text-stroke:0.3px #ffd800;">2.2</span>
<span class="t" style="left:2.70px;top:388.99px;font-size:12px;line-height:12px;color:#ffd800;transform:scaleX(0.8135);transform-origin:0 0;-webkit-text-stroke:0.3px #ffd800;">2.15</span>
<span class="t" style="left:2.70px;top:444.02px;font-size:12px;line-height:12px;color:#ffd800;transform:scaleX(0.7374);transform-origin:0 0;-webkit-text-stroke:0.3px #ffd800;">2.1</span>
<span class="t" style="left:2.70px;top:499.05px;font-size:12px;line-height:12px;color:#ffd800;transform:scaleX(0.8135);transform-origin:0 0;-webkit-text-stroke:0.3px #ffd800;">2.05</span>
<span class="t" style="left:2.70px;top:554.08px;font-size:12px;line-height:12px;color:#ffd800;-webkit-text-stroke:0.3px #ffd800;">2</span>
<span class="t" style="left:2.70px;top:609.11px;font-size:12px;line-height:12px;color:#ffd800;transform:scaleX(0.8135);transform-origin:0 0;-webkit-text-stroke:0.3px #ffd800;">1.95</span>
<span class="t" style="left:2.70px;top:664.14px;font-size:12px;line-height:12px;color:#ffd800;transform:scaleX(0.7374);transform-origin:0 0;-webkit-text-stroke:0.3px #ffd800;">1.9</span>
<span class="t" style="left:32.80px;top:681.34px;font-size:12px;line-height:12px;color:#fff;transform:scaleX(0.9548);transform-origin:0 0;-webkit-text-stroke:0.3px #fff;">-0.4 ms</span>
<span class="t" style="left:135.18px;top:681.34px;font-size:12px;line-height:12px;color:#fff;transform:scaleX(0.9548);transform-origin:0 0;-webkit-text-stroke:0.3px #fff;">-0.2 ms</span>
<span class="t" style="left:237.56px;top:681.34px;font-size:12px;line-height:12px;color:#fff;transform:scaleX(0.8960);transform-origin:0 0;-webkit-text-stroke:0.3px #fff;">0 ms</span>
<span class="t" style="left:339.94px;top:681.34px;font-size:12px;line-height:12px;color:#fff;transform:scaleX(0.8636);transform-origin:0 0;-webkit-text-stroke:0.3px #fff;">0.2 ms</span>
<span class="t" style="left:442.32px;top:681.34px;font-size:12px;line-height:12px;color:#fff;transform:scaleX(0.8636);transform-origin:0 0;-webkit-text-stroke:0.3px #fff;">0.4 ms</span>
<span class="t" style="left:544.70px;top:681.34px;font-size:12px;line-height:12px;color:#fff;transform:scaleX(0.8636);transform-origin:0 0;-webkit-text-stroke:0.3px #fff;">0.6 ms</span>
<span class="t" style="left:647.08px;top:681.34px;font-size:12px;line-height:12px;color:#fff;transform:scaleX(0.8636);transform-origin:0 0;-webkit-text-stroke:0.3px #fff;">0.8 ms</span>
<span class="t" style="left:749.46px;top:681.34px;font-size:12px;line-height:12px;color:#fff;transform:scaleX(0.8960);transform-origin:0 0;-webkit-text-stroke:0.3px #fff;">1 ms</span>
<span class="t" style="left:851.84px;top:681.34px;font-size:12px;line-height:12px;color:#fff;transform:scaleX(0.8636);transform-origin:0 0;-webkit-text-stroke:0.3px #fff;">1.2 ms</span>
<span class="t" style="left:954.22px;top:681.34px;font-size:12px;line-height:12px;color:#fff;transform:scaleX(0.8636);transform-origin:0 0;-webkit-text-stroke:0.3px #fff;">1.4 ms</span>
<span class="t" style="left:1056.60px;top:681.34px;font-size:12px;line-height:12px;color:#fff;transform:scaleX(0.8636);transform-origin:0 0;-webkit-text-stroke:0.3px #fff;">1.6 ms</span>
<div class="b" style="left:1px;top:679px;width:18px;height:20px;background:#e1e1e1;border:1px solid #f8f8f8;"></div>
<span class="t" style="left:5.50px;top:682.94px;font-size:12px;line-height:12px;color:#000;font-weight:bold;">X</span>
<div class="b" style="left:20px;top:679px;width:12px;height:20px;background:#e1e1e1;"></div>
<svg style="left:0;top:0" width="1" height="1"><path d="M22.5,688 H29.5 L26,692 Z" fill="#000"/></svg>
<div class="b" style="left:1100px;top:92px;width:201px;height:607px;background:#f0f0f0;"></div>
<div class="b" style="left:1100px;top:92px;width:3px;height:607px;background:#f7f7f7;"></div>
<div class="b" style="left:1283px;top:112px;width:1px;height:587px;background:#fbfbfb;"></div>
<div class="b" style="left:1100px;top:698px;width:201px;height:1px;background:#a8a8a8;"></div>
<svg style="left:0;top:0" width="1" height="1"><defs><linearGradient id="grt" x1="0" y1="0" x2="0" y2="1"><stop offset="0" stop-color="#3c9c3a"/><stop offset="0.5" stop-color="#a8e0a0"/><stop offset="1" stop-color="#3c9c3a"/></linearGradient><linearGradient id="gdn" x1="0" y1="0" x2="1" y2="0"><stop offset="0" stop-color="#2f902f"/><stop offset="0.5" stop-color="#9ad892"/><stop offset="1" stop-color="#2f902f"/></linearGradient></defs><path d="M1116.2,102.6 L1112.2,98.8 V101 H1104.8 V104.2 H1112.2 V106.4 Z" fill="url(#grt)" stroke="#4aa848" stroke-width="0.5" stroke-linejoin="round"/></svg>
<svg style="left:0;top:0" width="1" height="1"><path d="M1286.8,122.5 L1290.5,118.5 L1294.2,122.5" fill="none" stroke="#c0c0c0" stroke-width="1.6"/><path d="M1286.8,686.5 L1290.5,690.5 L1294.2,686.5" fill="none" stroke="#c0c0c0" stroke-width="1.6"/></svg>
<div class="b" style="left:1103px;top:112px;width:177px;height:90px;background:#fdfdfd;"></div>
<div class="b" style="left:1107px;top:116px;width:168px;height:82px;background:#f0f0f0;"></div>
<div class="b" style="left:1107px;top:117px;width:13px;height:13px;background:#fff;border:1px solid #333;"></div><svg style="left:0;top:0" width="1" height="1"><path d="M1109.6,123.2 l2.8,3 l5.2,-6" fill="none" stroke="#222" stroke-width="1.2"/></svg>
<span class="t" style="left:1125.40px;top:117.74px;font-size:12px;line-height:12px;color:#000;transform:scaleX(0.9115);transform-origin:0 0;">Time</span>
<div class="b" style="left:1252px;top:117px;width:22px;height:14px;background:#d8d8d8;border:1px solid #b0b0b0;"></div><svg style="left:0;top:0" width="1" height="1"><defs><linearGradient id="gr3" x1="0" y1="0" x2="1" y2="1"><stop offset="0" stop-color="#f4f5f6"/><stop offset="0.5" stop-color="#bcc2c8"/><stop offset="1" stop-color="#6f7c88"/></linearGradient></defs><polygon points="1267.46,124.21 1267.18,125.68 1266.06,125.57 1265.50,126.46 1266.02,127.54 1264.85,128.37 1264.14,127.44 1263.15,127.64 1262.81,128.80 1261.44,128.50 1261.54,127.30 1260.71,126.69 1259.71,127.25 1258.94,125.99 1259.80,125.22 1259.61,124.16 1258.54,123.79 1258.82,122.32 1259.94,122.43 1260.50,121.54 1259.98,120.46 1261.15,119.63 1261.86,120.56 1262.85,120.36 1263.19,119.20 1264.56,119.50 1264.46,120.70 1265.29,121.31 1266.29,120.75 1267.06,122.01 1266.20,122.78 1266.39,123.84" transform="translate(0.9,1.1)" fill="#70777d" opacity="0.35"/><polygon points="1267.46,124.21 1267.18,125.68 1266.06,125.57 1265.50,126.46 1266.02,127.54 1264.85,128.37 1264.14,127.44 1263.15,127.64 1262.81,128.80 1261.44,128.50 1261.54,127.30 1260.71,126.69 1259.71,127.25 1258.94,125.99 1259.80,125.22 1259.61,124.16 1258.54,123.79 1258.82,122.32 1259.94,122.43 1260.50,121.54 1259.98,120.46 1261.15,119.63 1261.86,120.56 1262.85,120.36 1263.19,119.20 1264.56,119.50 1264.46,120.70 1265.29,121.31 1266.29,120.75 1267.06,122.01 1266.20,122.78 1266.39,123.84" fill="url(#gr3)" stroke="#8f99a2" stroke-width="0.5"/><ellipse cx="1262.80" cy="124.00" rx="1.73" ry="2.02" fill="#55626c"/><ellipse cx="1263.90" cy="124.20" rx="1.30" ry="1.73" fill="#eef0f1"/></svg>
<span class="t" style="left:1112.40px;top:136.84px;font-size:12px;line-height:12px;color:#000;transform:scaleX(0.9212);transform-origin:0 0;">Position:</span>
<div class="b" style="left:1174px;top:133px;width:100px;height:20px;background:#fff;border:1px solid #5a5a5a;"></div><span class="t" style="left:1179.40px;top:137.04px;font-size:12px;line-height:12px;color:#000;transform:scaleX(0.9048);transform-origin:0 0;">600 us</span><svg style="left:1260.75px;top:141.25px" width="9.5" height="5.5"><polyline points="0.5,0.5 4.75,5 9,0.5" fill="none" stroke="#404040" stroke-width="1.1"/></svg>
<span class="t" style="left:1112.40px;top:158.14px;font-size:12px;line-height:12px;color:#000;transform:scaleX(0.8766);transform-origin:0 0;">Base:</span>
<div class="b" style="left:1174px;top:154px;width:100px;height:20px;background:#fff;border:1px solid #5a5a5a;"></div><span class="t" style="left:1179.40px;top:158.04px;font-size:12px;line-height:12px;color:#000;transform:scaleX(0.9799);transform-origin:0 0;">200 us/div</span><svg style="left:1260.75px;top:162.25px" width="9.5" height="5.5"><polyline points="0.5,0.5 4.75,5 9,0.5" fill="none" stroke="#404040" stroke-width="1.1"/></svg>
<div class="b" style="left:1108px;top:175px;width:167px;height:21px;background:#bfdcf3;border:1px solid #8cc6f5;"></div>
<svg style="left:0;top:0" width="1" height="1"><path d="M1191.9,193.8 L1187.8,189.6 H1190.2 V180.3 H1193.6 V189.6 H1196 Z" fill="url(#gdn)" stroke="#3c9c3a" stroke-width="0.5" stroke-linejoin="round"/></svg>
<svg style="left:0;top:0" width="1" height="1"><defs><linearGradient id="gr4" x1="0" y1="0" x2="1" y2="1"><stop offset="0" stop-color="#f4f5f6"/><stop offset="0.5" stop-color="#bcc2c8"/><stop offset="1" stop-color="#6f7c88"/></linearGradient></defs><polygon points="1121.32,215.79 1120.93,217.88 1119.34,217.72 1118.54,218.99 1119.28,220.51 1117.63,221.69 1116.61,220.37 1115.21,220.66 1114.73,222.29 1112.79,221.87 1112.94,220.17 1111.75,219.31 1110.34,220.10 1109.25,218.32 1110.47,217.23 1110.20,215.72 1108.68,215.21 1109.07,213.12 1110.66,213.28 1111.46,212.01 1110.72,210.49 1112.37,209.31 1113.39,210.63 1114.79,210.34 1115.27,208.71 1117.21,209.13 1117.06,210.83 1118.25,211.69 1119.66,210.90 1120.75,212.68 1119.53,213.77 1119.80,215.28" transform="translate(0.9,1.1)" fill="#70777d" opacity="0.35"/><polygon points="1121.32,215.79 1120.93,217.88 1119.34,217.72 1118.54,218.99 1119.28,220.51 1117.63,221.69 1116.61,220.37 1115.21,220.66 1114.73,222.29 1112.79,221.87 1112.94,220.17 1111.75,219.31 1110.34,220.10 1109.25,218.32 1110.47,217.23 1110.20,215.72 1108.68,215.21 1109.07,213.12 1110.66,213.28 1111.46,212.01 1110.72,210.49 1112.37,209.31 1113.39,210.63 1114.79,210.34 1115.27,208.71 1117.21,209.13 1117.06,210.83 1118.25,211.69 1119.66,210.90 1120.75,212.68 1119.53,213.77 1119.80,215.28" fill="url(#gr4)" stroke="#8f99a2" stroke-width="0.5"/><ellipse cx="1114.80" cy="215.50" rx="2.45" ry="2.86" fill="#55626c"/><ellipse cx="1115.90" cy="215.70" rx="1.84" ry="2.45" fill="#eef0f1"/></svg>
<span class="t" style="left:1127.00px;top:209.74px;font-size:12px;line-height:12px;color:#000;transform:scaleX(0.9431);transform-origin:0 0;">Options</span>
<div class="b" style="left:1104px;top:230px;width:174px;height:22px;background:#e1e1e1;border:1px solid #adadad;"></div>
<svg style="left:0;top:0" width="1" height="1"><defs><linearGradient id="pl2" x1="0" y1="0" x2="0.8" y2="1"><stop offset="0" stop-color="#c4f4a4"/><stop offset="0.45" stop-color="#6fd23e"/><stop offset="1" stop-color="#3fb41c"/></linearGradient></defs><path d="M1114.35,234.4 h3.3 v4.95 h4.95 v3.3 h-4.95 v4.95 h-3.3 v-4.95 h-4.95 v-3.3 h4.95 z" transform="translate(0.7,0.9)" fill="#4a6a3a" opacity="0.35" stroke="#4a6a3a" stroke-width="0.8" stroke-linejoin="round"/><path d="M1114.35,234.4 h3.3 v4.95 h4.95 v3.3 h-4.95 v4.95 h-3.3 v-4.95 h-4.95 v-3.3 h4.95 z" fill="url(#pl2)" stroke="#48b020" stroke-width="0.7" stroke-linejoin="round"/></svg>
<span class="t" style="left:1127.00px;top:235.14px;font-size:12px;line-height:12px;color:#000;transform:scaleX(0.9224);transform-origin:0 0;">Add Channel</span>
<svg style="left:0;top:0" width="1" height="1"><path d="M1265,213 H1272.6 L1268.8,217.4 Z M1265,238.8 H1272.6 L1268.8,243.2 Z" fill="#000"/></svg>
<div class="b" style="left:1103px;top:254px;width:177px;height:67px;background:#f0f0f0;border:3px solid #fcc800;"></div><div class="b" style="left:1107.5px;top:259.5px;width:13px;height:13px;background:#fff;border:1px solid #333;"></div><svg style="left:0;top:0" width="1" height="1"><path d="M1110.1,265.7 l2.8,3 l5.2,-6" fill="none" stroke="#222" stroke-width="1.2"/></svg><span class="t" style="left:1124.30px;top:259.94px;font-size:12px;line-height:12px;color:#000;letter-spacing:0.185px;">Channel 1 (1±)</span><div class="b" style="left:1252px;top:259px;width:22px;height:13px;background:#d8d8d8;border:1px solid #b0b0b0;"></div><svg style="left:0;top:0" width="1" height="1"><defs><linearGradient id="gr5" x1="0" y1="0" x2="1" y2="1"><stop offset="0" stop-color="#f4f5f6"/><stop offset="0.5" stop-color="#bcc2c8"/><stop offset="1" stop-color="#6f7c88"/></linearGradient></defs><polygon points="1267.46,265.71 1267.18,267.18 1266.06,267.07 1265.50,267.96 1266.02,269.04 1264.85,269.87 1264.14,268.94 1263.15,269.14 1262.81,270.30 1261.44,270.00 1261.54,268.80 1260.71,268.19 1259.71,268.75 1258.94,267.49 1259.80,266.72 1259.61,265.66 1258.54,265.29 1258.82,263.82 1259.94,263.93 1260.50,263.04 1259.98,261.96 1261.15,261.13 1261.86,262.06 1262.85,261.86 1263.19,260.70 1264.56,261.00 1264.46,262.20 1265.29,262.81 1266.29,262.25 1267.06,263.51 1266.20,264.28 1266.39,265.34" transform="translate(0.9,1.1)" fill="#70777d" opacity="0.35"/><polygon points="1267.46,265.71 1267.18,267.18 1266.06,267.07 1265.50,267.96 1266.02,269.04 1264.85,269.87 1264.14,268.94 1263.15,269.14 1262.81,270.30 1261.44,270.00 1261.54,268.80 1260.71,268.19 1259.71,268.75 1258.94,267.49 1259.80,266.72 1259.61,265.66 1258.54,265.29 1258.82,263.82 1259.94,263.93 1260.50,263.04 1259.98,261.96 1261.15,261.13 1261.86,262.06 1262.85,261.86 1263.19,260.70 1264.56,261.00 1264.46,262.20 1265.29,262.81 1266.29,262.25 1267.06,263.51 1266.20,264.28 1266.39,265.34" fill="url(#gr5)" stroke="#8f99a2" stroke-width="0.5"/><ellipse cx="1262.80" cy="265.50" rx="1.73" ry="2.02" fill="#55626c"/><ellipse cx="1263.90" cy="265.70" rx="1.30" ry="1.73" fill="#eef0f1"/></svg><span class="t" style="left:1111.70px;top:278.44px;font-size:12px;line-height:12px;color:#000;transform:scaleX(0.9707);transform-origin:0 0;">Offset:</span><div class="b" style="left:1174px;top:275px;width:100px;height:20px;background:#fff;border:1px solid #5a5a5a;"></div><span class="t" style="left:1179.40px;top:279.04px;font-size:12px;line-height:12px;color:#000;transform:scaleX(0.9201);transform-origin:0 0;">-2.15 V</span><svg style="left:1260.75px;top:283.25px" width="9.5" height="5.5"><polyline points="0.5,0.5 4.75,5 9,0.5" fill="none" stroke="#404040" stroke-width="1.1"/></svg><span class="t" style="left:1111.70px;top:299.94px;font-size:12px;line-height:12px;color:#000;transform:scaleX(0.8813);transform-origin:0 0;">Range:</span><div class="b" style="left:1174px;top:296px;width:100px;height:20px;background:#fff;border:1px solid #5a5a5a;"></div><span class="t" style="left:1179.40px;top:300.04px;font-size:12px;line-height:12px;color:#000;transform:scaleX(0.9858);transform-origin:0 0;">50 mV/div</span><svg style="left:1260.75px;top:304.25px" width="9.5" height="5.5"><polyline points="0.5,0.5 4.75,5 9,0.5" fill="none" stroke="#404040" stroke-width="1.1"/></svg>
<div class="b" style="left:1103px;top:322px;width:177px;height:67px;background:#f0f0f0;border:3px solid #1cb4f4;"></div><div class="b" style="left:1107.5px;top:327.5px;width:13px;height:13px;background:#fff;border:1px solid #333;"></div><svg style="left:0;top:0" width="1" height="1"><path d="M1110.1,333.7 l2.8,3 l5.2,-6" fill="none" stroke="#222" stroke-width="1.2"/></svg><span class="t" style="left:1124.30px;top:327.94px;font-size:12px;line-height:12px;color:#000;letter-spacing:0.185px;">Channel 2 (2±)</span><div class="b" style="left:1252px;top:327px;width:22px;height:13px;background:#d8d8d8;border:1px solid #b0b0b0;"></div><svg style="left:0;top:0" width="1" height="1"><defs><linearGradient id="gr6" x1="0" y1="0" x2="1" y2="1"><stop offset="0" stop-color="#f4f5f6"/><stop offset="0.5" stop-color="#bcc2c8"/><stop offset="1" stop-color="#6f7c88"/></linearGradient></defs><polygon points="1267.46,333.71 1267.18,335.18 1266.06,335.07 1265.50,335.96 1266.02,337.04 1264.85,337.87 1264.14,336.94 1263.15,337.14 1262.81,338.30 1261.44,338.00 1261.54,336.80 1260.71,336.19 1259.71,336.75 1258.94,335.49 1259.80,334.72 1259.61,333.66 1258.54,333.29 1258.82,331.82 1259.94,331.93 1260.50,331.04 1259.98,329.96 1261.15,329.13 1261.86,330.06 1262.85,329.86 1263.19,328.70 1264.56,329.00 1264.46,330.20 1265.29,330.81 1266.29,330.25 1267.06,331.51 1266.20,332.28 1266.39,333.34" transform="translate(0.9,1.1)" fill="#70777d" opacity="0.35"/><polygon points="1267.46,333.71 1267.18,335.18 1266.06,335.07 1265.50,335.96 1266.02,337.04 1264.85,337.87 1264.14,336.94 1263.15,337.14 1262.81,338.30 1261.44,338.00 1261.54,336.80 1260.71,336.19 1259.71,336.75 1258.94,335.49 1259.80,334.72 1259.61,333.66 1258.54,333.29 1258.82,331.82 1259.94,331.93 1260.50,331.04 1259.98,329.96 1261.15,329.13 1261.86,330.06 1262.85,329.86 1263.19,328.70 1264.56,329.00 1264.46,330.20 1265.29,330.81 1266.29,330.25 1267.06,331.51 1266.20,332.28 1266.39,333.34" fill="url(#gr6)" stroke="#8f99a2" stroke-width="0.5"/><ellipse cx="1262.80" cy="333.50" rx="1.73" ry="2.02" fill="#55626c"/><ellipse cx="1263.90" cy="333.70" rx="1.30" ry="1.73" fill="#eef0f1"/></svg><span class="t" style="left:1111.70px;top:346.44px;font-size:12px;line-height:12px;color:#000;transform:scaleX(0.9707);transform-origin:0 0;">Offset:</span><div class="b" style="left:1174px;top:343px;width:100px;height:20px;background:#fff;border:1px solid #5a5a5a;"></div><span class="t" style="left:1179.40px;top:347.04px;font-size:12px;line-height:12px;color:#000;transform:scaleX(0.8933);transform-origin:0 0;">-1.2 V</span><svg style="left:1260.75px;top:351.25px" width="9.5" height="5.5"><polyline points="0.5,0.5 4.75,5 9,0.5" fill="none" stroke="#404040" stroke-width="1.1"/></svg><span class="t" style="left:1111.70px;top:367.94px;font-size:12px;line-height:12px;color:#000;transform:scaleX(0.8813);transform-origin:0 0;">Range:</span><div class="b" style="left:1174px;top:364px;width:100px;height:20px;background:#fff;border:1px solid #5a5a5a;"></div><span class="t" style="left:1179.40px;top:368.04px;font-size:12px;line-height:12px;color:#000;transform:scaleX(0.9858);transform-origin:0 0;">50 mV/div</span><svg style="left:1260.75px;top:372.25px" width="9.5" height="5.5"><polyline points="0.5,0.5 4.75,5 9,0.5" fill="none" stroke="#404040" stroke-width="1.1"/></svg>
<div class="b" style="left:1114px;top:622px;width:151px;height:52px;background:#f8f8f8;"></div>
<span class="t" style="left:1157.60px;top:623.94px;font-size:12px;line-height:12px;color:#000;letter-spacing:0.335px;font-weight:bold;">My Project</span>
<span class="t" style="left:1156.90px;top:635.94px;font-size:12px;line-height:12px;color:#000;letter-spacing:0.162px;font-weight:bold;">Discovery2</span>
<span class="t" style="left:1135.50px;top:647.94px;font-size:12px;line-height:12px;color:#000;letter-spacing:0.257px;font-weight:bold;">SN:210321A7F647</span>
<span class="t" style="left:1116.50px;top:659.94px;font-size:12px;line-height:12px;color:#000;letter-spacing:0.457px;font-weight:bold;">2022-11-23 14:14:39.171</span>
</body></html>
